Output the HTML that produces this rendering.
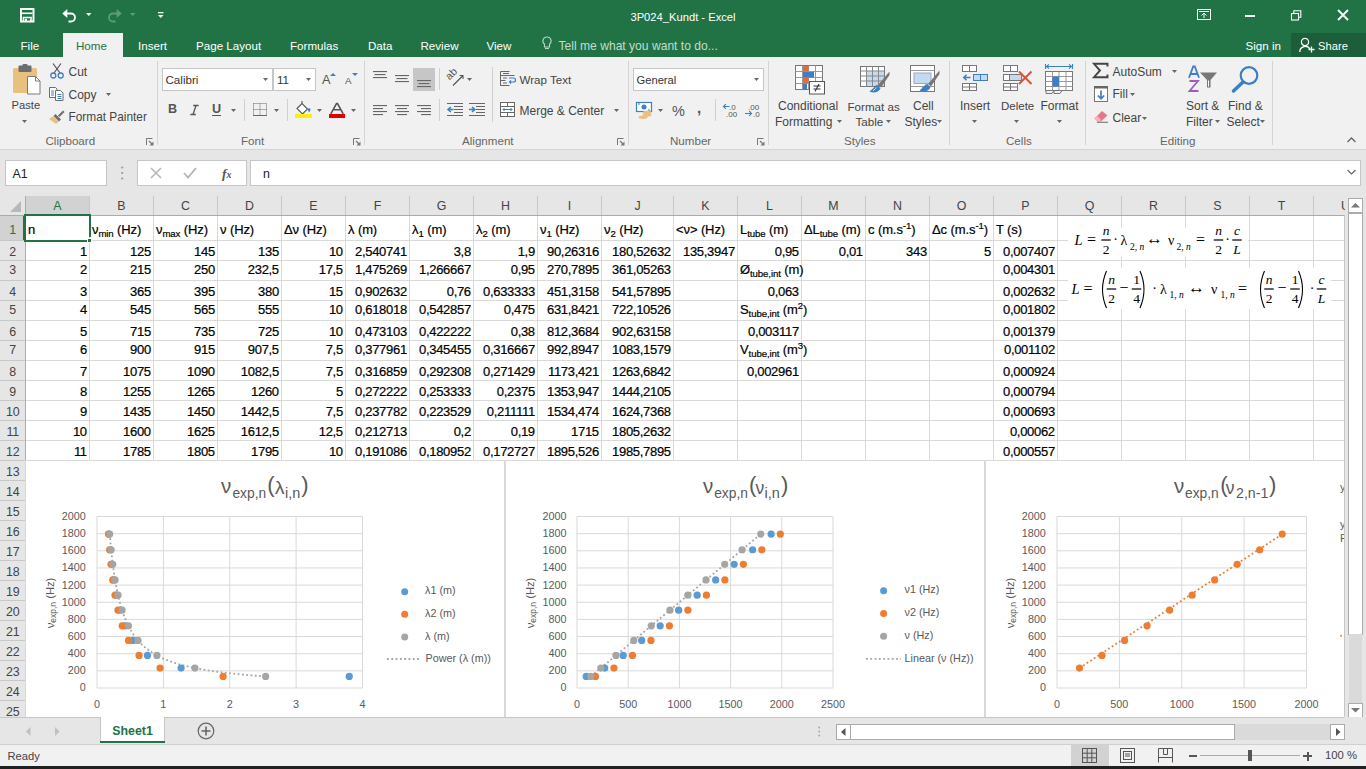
<!DOCTYPE html><html><head><meta charset="utf-8"><style>
*{margin:0;padding:0;box-sizing:border-box}
html,body{width:1366px;height:769px;overflow:hidden;background:#fff;font-family:"Liberation Sans",sans-serif}
.a{position:absolute}
.t{position:absolute;white-space:nowrap;line-height:1}
sub{font-size:74%;vertical-align:-0.3em;line-height:0}
sup{font-size:74%;vertical-align:0.55em;line-height:0}
svg{position:absolute;overflow:visible}
</style></head><body><div class="a" style="left:0px;top:0px;width:1366px;height:57px;background:#217346;"></div>
<svg style="left:20px;top:8px" width="15" height="14" viewBox="0 0 15 14"><path d="M1 1h12.5v12.5H1z" fill="none" stroke="#fff" stroke-width="1.9"/><path d="M2 5.3h10.5" stroke="#fff" stroke-width="1.6"/><path d="M3.5 13.5V9.5h7.5v4" fill="none" stroke="#fff" stroke-width="1.6"/><rect x="5" y="10.8" width="2" height="2.7" fill="#fff"/></svg>
<svg style="left:62px;top:8px" width="16" height="14" viewBox="0 0 16 14"><path d="M4.5 5.5H9a4 4 0 0 1 0 8H6.5" fill="none" stroke="#fff" stroke-width="1.8"/><path d="M0.3 5.5L5.3 1v9z" fill="#fff"/></svg>
<svg style="left:86px;top:13px" width="6" height="4" viewBox="0 0 6 4"><path d="M0 0h5.5L2.75 3z" fill="#fff"/></svg>
<svg style="left:106px;top:8px" width="16" height="14" viewBox="0 0 16 14"><path d="M11.5 5.5H7a4 4 0 0 0 0 8h2.5" fill="none" stroke="#5e9c78" stroke-width="1.8"/><path d="M15.7 5.5L10.7 1v9z" fill="#5e9c78"/></svg>
<svg style="left:130px;top:13px" width="6" height="4" viewBox="0 0 6 4"><path d="M0 0h5.5L2.75 3z" fill="#5e9c78"/></svg>
<svg style="left:157.5px;top:11.5px" width="6" height="7" viewBox="0 0 6 7"><rect x="0" y="0" width="5.5" height="1.3" fill="#fff"/><path d="M0 3h5.5L2.75 6z" fill="#fff"/></svg>
<div class="t" style="left:483.00px;width:400px;text-align:center;top:11.52px;font-size:11.2px;color:#fff;">3P024_Kundt - Excel</div>
<svg style="left:1197px;top:9px" width="14" height="12" viewBox="0 0 14 12"><rect x="0.5" y="0.5" width="13" height="10" fill="none" stroke="#fff"/><path d="M7 9V4M4.5 6.5L7 4l2.5 2.5" fill="none" stroke="#fff"/><path d="M2 2.5h10" stroke="#fff"/></svg>
<div class="a" style="left:1245px;top:15px;width:10px;height:2px;background:#fff;"></div>
<svg style="left:1291px;top:10px" width="11" height="11" viewBox="0 0 11 11"><rect x="0.5" y="3.5" width="7" height="6.5" fill="none" stroke="#fff" stroke-width="1.1"/><path d="M2.8 3.5V0.8h7v6.5H7.5" fill="none" stroke="#fff" stroke-width="1.1"/></svg>
<svg style="left:1337px;top:9px" width="12" height="12" viewBox="0 0 12 12"><path d="M1 1l10 10M11 1L1 11" stroke="#fff" stroke-width="1.8"/></svg>
<div class="a" style="left:63px;top:33px;width:60px;height:24px;background:#f1f1f1;"></div>
<div class="t" style="left:20.50px;top:40.18px;font-size:11.6px;color:#fff;">File</div>
<div class="t" style="left:76.00px;top:40.18px;font-size:11.6px;color:#217346;">Home</div>
<div class="t" style="left:138.00px;top:40.18px;font-size:11.6px;color:#fff;">Insert</div>
<div class="t" style="left:196.00px;top:40.18px;font-size:11.6px;color:#fff;">Page Layout</div>
<div class="t" style="left:290.00px;top:40.18px;font-size:11.6px;color:#fff;">Formulas</div>
<div class="t" style="left:368.00px;top:40.18px;font-size:11.6px;color:#fff;">Data</div>
<div class="t" style="left:420.50px;top:40.18px;font-size:11.6px;color:#fff;">Review</div>
<div class="t" style="left:486.50px;top:40.18px;font-size:11.6px;color:#fff;">View</div>
<svg style="left:542px;top:36px" width="10" height="15" viewBox="0 0 10 15"><path d="M5 1a4 4 0 0 0-2.5 7.2V11h5V8.2A4 4 0 0 0 5 1z" fill="none" stroke="#b9d6c5" stroke-width="1.1"/><path d="M3 12.5h4" stroke="#b9d6c5" stroke-width="1.1"/></svg>
<div class="t" style="left:558.50px;top:39.76px;font-size:12.1px;color:#c3dccd;">Tell me what you want to do...</div>
<div class="t" style="left:1245.50px;top:40.18px;font-size:11.6px;color:#fff;">Sign in</div>
<div class="a" style="left:1291px;top:33px;width:75px;height:24px;background:#1b5e39;"></div>
<svg style="left:1299px;top:37px" width="16" height="16" viewBox="0 0 16 16"><circle cx="6" cy="5" r="3.6" fill="none" stroke="#fff" stroke-width="1.3"/><path d="M0.8 15a5.5 5.5 0 0 1 10.4-2.5" fill="none" stroke="#fff" stroke-width="1.3"/><path d="M12.5 9.5v6M9.5 12.5h6" stroke="#fff" stroke-width="1.3"/></svg>
<div class="t" style="left:1318.00px;top:40.52px;font-size:11.2px;color:#fff;">Share</div>
<div class="a" style="left:0px;top:57px;width:1366px;height:92px;background:#f1f1f1;"></div>
<div class="a" style="left:0px;top:149px;width:1366px;height:1px;background:#d5d5d5;"></div>
<svg style="left:13px;top:65px" width="29" height="30" viewBox="0 0 29 30"><rect x="0" y="3" width="24" height="25" rx="1.5" fill="#e8c07f"/><rect x="5.5" y="0.5" width="13" height="6.5" rx="1" fill="#6d6d6d"/><rect x="9.5" y="-1" width="5" height="3" rx="1" fill="#6d6d6d"/><path d="M14.5 11.5h8l4.5 4.5v13h-12.5z" fill="#fff" stroke="#7a7a7a" stroke-width="1"/><path d="M22.5 11.5v4.5h4.5" fill="none" stroke="#7a7a7a" stroke-width="1"/></svg>
<div class="t" style="left:11.50px;top:100.02px;font-size:11.2px;color:#444;">Paste</div>
<svg style="left:22.0px;top:120.0px" width="5" height="3" viewBox="0 0 5 3"><path d="M0 0h5L2.5 3z" fill="#666"/></svg>
<svg style="left:50px;top:63px" width="14" height="16" viewBox="0 0 14 16"><path d="M3 0.5l7 9.5M11 0.5L4 10" stroke="#555" stroke-width="1.2"/><circle cx="3.3" cy="12.5" r="2.5" fill="none" stroke="#3d7ec4" stroke-width="1.3"/><circle cx="10.7" cy="12.5" r="2.5" fill="none" stroke="#3d7ec4" stroke-width="1.3"/></svg>
<div class="t" style="left:68.50px;top:65.84px;font-size:12px;color:#444;">Cut</div>
<svg style="left:49px;top:87px" width="15" height="14" viewBox="0 0 15 14"><path d="M0.5 0.5h6l1.5 1.5v8.5H0.5z" fill="#fff" stroke="#6d6d6d"/><path d="M6.5 3.5h5l2.5 2.5v7.5h-7.5z" fill="#fff" stroke="#6d6d6d"/><path d="M2 4h3M2 6h3M2 8h3" stroke="#3d7ec4"/><path d="M8.5 7.5h4M8.5 9.5h4M8.5 11.5h4" stroke="#3d7ec4"/></svg>
<div class="t" style="left:68.50px;top:88.84px;font-size:12px;color:#444;">Copy</div>
<svg style="left:106.0px;top:93.0px" width="5" height="3" viewBox="0 0 5 3"><path d="M0 0h5L2.5 3z" fill="#666"/></svg>
<svg style="left:49px;top:110px" width="16" height="14" viewBox="0 0 16 14"><path d="M9 5.5l5-5 1.5 1.5-5 5z" fill="#6d6d6d"/><path d="M6.5 4l5.5 5.5-2 2L4.5 6z" fill="#6d6d6d"/><path d="M0 9l4.5-3 5.5 5.5-3 2.5z" fill="#e8c07f"/></svg>
<div class="t" style="left:68.50px;top:111.97px;font-size:11.85px;color:#444;">Format Painter</div>
<div class="t" style="left:45.50px;top:135.18px;font-size:11.6px;color:#666;">Clipboard</div>
<svg style="left:146px;top:138px" width="8" height="8" viewBox="0 0 8 8"><path d="M0.5 7V0.5H6.5" fill="none" stroke="#777" stroke-width="1"/><path d="M3 3l3 3" stroke="#777" stroke-width="1.2"/><path d="M7.5 3.5v4h-4z" fill="#777"/></svg>
<div class="a" style="left:157px;top:61px;width:1px;height:84px;background:#d5d5d5;"></div>
<div class="a" style="left:162px;top:68px;width:111px;height:23px;background:#fff;border:1px solid #c6c6c6"></div>
<div class="t" style="left:165.50px;top:74.18px;font-size:11.6px;color:#333;">Calibri</div>
<svg style="left:263.0px;top:78.0px" width="5" height="3" viewBox="0 0 5 3"><path d="M0 0h5L2.5 3z" fill="#666"/></svg>
<div class="a" style="left:273px;top:68px;width:43px;height:23px;background:#fff;border:1px solid #c6c6c6"></div>
<div class="t" style="left:277.00px;top:74.18px;font-size:11.6px;color:#333;">11</div>
<svg style="left:306.0px;top:78.0px" width="5" height="3" viewBox="0 0 5 3"><path d="M0 0h5L2.5 3z" fill="#666"/></svg>
<div class="t" style="left:322.00px;top:73.76px;font-size:12.8px;color:#555;">A</div>
<svg style="left:330px;top:72.5px" width="6" height="3" viewBox="0 0 6 3"><path d="M0 3L3 0 6 3z" fill="#3d7ec4"/></svg>
<div class="t" style="left:345.00px;top:76.30px;font-size:9.8px;color:#555;">A</div>
<svg style="left:352px;top:72.5px" width="6" height="3" viewBox="0 0 6 3"><path d="M0 0h6L3 3z" fill="#3d7ec4"/></svg>
<div class="t" style="left:168.00px;top:103.13px;font-size:12.6px;color:#555;font-weight:bold">B</div>
<svg style="left:190px;top:104.5px" width="9" height="10" viewBox="0 0 9 10"><path d="M3.2 0.5h5.5M0.3 9.5h5.5M6 0.5L3 9.5" fill="none" stroke="#555" stroke-width="1.3"/></svg>
<div class="t" style="left:212.00px;top:103.13px;font-size:12.6px;color:#555;font-weight:bold">U</div>
<div class="a" style="left:212px;top:115px;width:9px;height:1.3px;background:#555;"></div>
<svg style="left:231.0px;top:109.0px" width="5" height="3" viewBox="0 0 5 3"><path d="M0 0h5L2.5 3z" fill="#666"/></svg>
<div class="a" style="left:244px;top:99px;width:1px;height:22px;background:#d0d0d0;"></div>
<svg style="left:253px;top:103px" width="14" height="13" viewBox="0 0 14 13"><path d="M0.5 0.5h13v12M0.5 0.5v12M7 0.5v12M0.5 6.5h13" fill="none" stroke="#666" stroke-width="1" stroke-dasharray="1 1"/><path d="M0 12.5h14" stroke="#666" stroke-width="1"/></svg>
<svg style="left:274.0px;top:109.0px" width="5" height="3" viewBox="0 0 5 3"><path d="M0 0h5L2.5 3z" fill="#666"/></svg>
<div class="a" style="left:287px;top:99px;width:1px;height:22px;background:#d0d0d0;"></div>
<svg style="left:295px;top:101px" width="17" height="17" viewBox="0 0 17 17"><path d="M2 7.5l5-5 5.5 5.5-5 5z" fill="#fff" stroke="#555" stroke-width="1.1"/><path d="M7 2.5V0" stroke="#555" stroke-width="1.1"/><path d="M12.5 8c1.5-1 2.5-1 3 .5-.5 1.5-1 2.5-1.5 3z" fill="#3d7ec4"/><rect x="0" y="13" width="17" height="4" fill="#ffef00"/></svg>
<svg style="left:317.0px;top:109.0px" width="5" height="3" viewBox="0 0 5 3"><path d="M0 0h5L2.5 3z" fill="#666"/></svg>
<svg style="left:330px;top:103px" width="14" height="11" viewBox="0 0 14 11"><path d="M0.8 10.8L6.5 0.5h1L13.2 10.8M3 6.8h8" fill="none" stroke="#555" stroke-width="1.6"/></svg>
<div class="a" style="left:329px;top:114px;width:16px;height:4px;background:#e00000;"></div>
<svg style="left:351.0px;top:109.0px" width="5" height="3" viewBox="0 0 5 3"><path d="M0 0h5L2.5 3z" fill="#666"/></svg>
<div class="t" style="left:241.00px;top:135.18px;font-size:11.6px;color:#666;">Font</div>
<svg style="left:353px;top:138px" width="8" height="8" viewBox="0 0 8 8"><path d="M0.5 7V0.5H6.5" fill="none" stroke="#777" stroke-width="1"/><path d="M3 3l3 3" stroke="#777" stroke-width="1.2"/><path d="M7.5 3.5v4h-4z" fill="#777"/></svg>
<div class="a" style="left:364px;top:61px;width:1px;height:84px;background:#d5d5d5;"></div>
<svg style="left:373px;top:71px" width="14" height="9" viewBox="0 0 14 9"><rect x="0.0" y="0" width="14" height="1.1" fill="#666"/><rect x="1.5" y="3" width="11" height="1.1" fill="#666"/><rect x="0.0" y="6" width="14" height="1.1" fill="#666"/></svg>
<svg style="left:395px;top:75px" width="14" height="9" viewBox="0 0 14 9"><rect x="0.0" y="0" width="14" height="1.1" fill="#666"/><rect x="1.5" y="3" width="11" height="1.1" fill="#666"/><rect x="0.0" y="6" width="14" height="1.1" fill="#666"/></svg>
<div class="a" style="left:413px;top:68px;width:22px;height:23px;background:#c6c6c6;"></div>
<svg style="left:417px;top:80px" width="14" height="9" viewBox="0 0 14 9"><rect x="0.0" y="0" width="14" height="1.1" fill="#666"/><rect x="1.5" y="3" width="11" height="1.1" fill="#666"/><rect x="0.0" y="6" width="14" height="1.1" fill="#666"/></svg>
<svg style="left:373px;top:104.5px" width="14" height="12" viewBox="0 0 14 12"><rect x="0" y="0" width="14" height="1.1" fill="#666"/><rect x="0" y="3" width="10" height="1.1" fill="#666"/><rect x="0" y="6" width="14" height="1.1" fill="#666"/><rect x="0" y="9" width="10" height="1.1" fill="#666"/></svg>
<svg style="left:395px;top:104.5px" width="14" height="12" viewBox="0 0 14 12"><rect x="0.0" y="0" width="14" height="1.1" fill="#666"/><rect x="2.0" y="3" width="10" height="1.1" fill="#666"/><rect x="0.0" y="6" width="14" height="1.1" fill="#666"/><rect x="2.0" y="9" width="10" height="1.1" fill="#666"/></svg>
<svg style="left:417px;top:104.5px" width="14" height="12" viewBox="0 0 14 12"><rect x="0" y="0" width="14" height="1.1" fill="#666"/><rect x="4" y="3" width="10" height="1.1" fill="#666"/><rect x="0" y="6" width="14" height="1.1" fill="#666"/><rect x="4" y="9" width="10" height="1.1" fill="#666"/></svg>
<svg style="left:447px;top:71px" width="17" height="15" viewBox="0 0 17 15"><text x="0" y="0" font-size="10.5" fill="#555" font-family="Liberation Sans" transform="translate(2.5,9.5) rotate(-45)">ab</text><path d="M6 14.5L16 4.5M12.5 4.5H16V8" fill="none" stroke="#555" stroke-width="1.1"/></svg>
<svg style="left:467.0px;top:78.0px" width="5" height="3" viewBox="0 0 5 3"><path d="M0 0h5L2.5 3z" fill="#666"/></svg>
<div class="a" style="left:439px;top:68px;width:1px;height:22px;background:#d0d0d0;"></div>
<div class="a" style="left:439px;top:99px;width:1px;height:22px;background:#d0d0d0;"></div>
<svg style="left:447px;top:103px" width="16" height="13" viewBox="0 0 16 13"><path d="M0 0.5h16M7 3.5h9M7 6.5h9M7 9.5h9M0 12.5h16" stroke="#666" stroke-width="1.1"/><path d="M1 6.5h5.5M3.8 4L1 6.5 3.8 9" fill="none" stroke="#3d7ec4" stroke-width="1.6"/></svg>
<svg style="left:469px;top:103px" width="16" height="13" viewBox="0 0 16 13"><path d="M0 0.5h16M7 3.5h9M7 6.5h9M7 9.5h9M0 12.5h16" stroke="#666" stroke-width="1.1"/><path d="M0 6.5h5.5M3 4l2.8 2.5L3 9" fill="none" stroke="#3d7ec4" stroke-width="1.6"/></svg>
<div class="a" style="left:492px;top:67px;width:1px;height:55px;background:#d0d0d0;"></div>
<svg style="left:500px;top:71px" width="16" height="15" viewBox="0 0 16 15"><path d="M0.5 0.5h9M0.5 0.5v14M0.5 4.5h14M0.5 9.5h5M0.5 14.5h9M3 2.5h6M3 7h4M3 12h4" fill="none" stroke="#666"/><path d="M9 7h4.5a2 2 0 0 1 0 4H9.5M11 9.5l-1.5 1.5 1.5 1.5" fill="none" stroke="#3d7ec4" stroke-width="1.2"/></svg>
<div class="t" style="left:519.50px;top:74.18px;font-size:11.6px;color:#444;">Wrap Text</div>
<svg style="left:500px;top:102px" width="15" height="15" viewBox="0 0 15 15"><rect x="0.5" y="0.5" width="14" height="14" fill="#fff" stroke="#666"/><path d="M0.5 4.5h14M0.5 10.5h14M7.5 0.5v4M7.5 10.5v4" stroke="#666"/><path d="M3 7.5h9M4.5 6L3 7.5 4.5 9M10.5 6L12 7.5 10.5 9" fill="none" stroke="#3d7ec4"/></svg>
<div class="t" style="left:519.50px;top:104.84px;font-size:12px;color:#444;">Merge &amp; Center</div>
<svg style="left:614.0px;top:109.0px" width="5" height="3" viewBox="0 0 5 3"><path d="M0 0h5L2.5 3z" fill="#666"/></svg>
<div class="t" style="left:462.00px;top:135.18px;font-size:11.6px;color:#666;">Alignment</div>
<svg style="left:617px;top:138px" width="8" height="8" viewBox="0 0 8 8"><path d="M0.5 7V0.5H6.5" fill="none" stroke="#777" stroke-width="1"/><path d="M3 3l3 3" stroke="#777" stroke-width="1.2"/><path d="M7.5 3.5v4h-4z" fill="#777"/></svg>
<div class="a" style="left:628px;top:61px;width:1px;height:84px;background:#d5d5d5;"></div>
<div class="a" style="left:633px;top:68px;width:131px;height:23px;background:#fff;border:1px solid #c6c6c6"></div>
<div class="t" style="left:636.50px;top:74.52px;font-size:11.2px;color:#333;">General</div>
<svg style="left:754.0px;top:78.0px" width="5" height="3" viewBox="0 0 5 3"><path d="M0 0h5L2.5 3z" fill="#666"/></svg>
<svg style="left:636px;top:102px" width="17" height="17" viewBox="0 0 17 17"><rect x="0.5" y="0.5" width="15" height="9" fill="#fff" stroke="#3d7ec4" stroke-width="1.2"/><path d="M2 2h2M12 8h2" stroke="#3d7ec4"/><circle cx="8" cy="5" r="2.5" fill="#3d7ec4"/><ellipse cx="11" cy="10.5" rx="4.5" ry="1.7" fill="#e8c07f"/><ellipse cx="11" cy="13" rx="4.5" ry="1.7" fill="#e8c07f"/><ellipse cx="7" cy="15.3" rx="4.5" ry="1.7" fill="#e8c07f"/></svg>
<svg style="left:658.0px;top:109.0px" width="5" height="3" viewBox="0 0 5 3"><path d="M0 0h5L2.5 3z" fill="#666"/></svg>
<div class="t" style="left:672.00px;top:103.73px;font-size:14.5px;color:#555;">%</div>
<div class="t" style="left:697.00px;top:99.80px;font-size:15px;color:#555;font-weight:bold">,</div>
<div class="a" style="left:715px;top:99px;width:1px;height:22px;background:#d0d0d0;"></div>
<svg style="left:723px;top:103px" width="15" height="14" viewBox="0 0 15 14"><text x="6" y="6.5" font-size="8" fill="#555" font-family="Liberation Sans">.0</text><text x="3" y="13.5" font-size="8" fill="#555" font-family="Liberation Sans">.00</text><path d="M0.5 3.5h6M2.8 1.2L0.5 3.5l2.3 2.3" fill="none" stroke="#3d7ec4" stroke-width="1.1"/></svg>
<svg style="left:745px;top:103px" width="15" height="14" viewBox="0 0 15 14"><text x="3" y="6.5" font-size="8" fill="#555" font-family="Liberation Sans">.00</text><text x="8" y="13.5" font-size="8" fill="#555" font-family="Liberation Sans">.0</text><path d="M0 10.5h6.5M4.2 8.2l2.3 2.3-2.3 2.3" fill="none" stroke="#3d7ec4" stroke-width="1.1"/></svg>
<div class="t" style="left:670.00px;top:135.18px;font-size:11.6px;color:#666;">Number</div>
<svg style="left:757px;top:138px" width="8" height="8" viewBox="0 0 8 8"><path d="M0.5 7V0.5H6.5" fill="none" stroke="#777" stroke-width="1"/><path d="M3 3l3 3" stroke="#777" stroke-width="1.2"/><path d="M7.5 3.5v4h-4z" fill="#777"/></svg>
<div class="a" style="left:768px;top:61px;width:1px;height:84px;background:#d5d5d5;"></div>
<svg style="left:795px;top:65px" width="31" height="30" viewBox="0 0 31 30"><rect x="0.5" y="0.5" width="27" height="24" fill="#fff" stroke="#777"/><path d="M0.5 6.5h27M0.5 12.5h27M0.5 18.5h27M7.5 0.5v24M13.5 0.5v24M20.5 0.5v24" stroke="#999"/><rect x="8" y="1" width="5.5" height="5.5" fill="#e46c3a"/><rect x="8" y="7" width="11" height="5.5" fill="#3d7ec4"/><rect x="8" y="13" width="5.5" height="5.5" fill="#e46c3a"/><rect x="8" y="19" width="4" height="5.5" fill="#3d7ec4"/><rect x="14.5" y="16.5" width="15" height="12.5" fill="#fff" stroke="#555"/><path d="M18.5 21h7M18.5 24h7M24 19l-4 7.5" stroke="#333" stroke-width="1.1"/></svg>
<div class="t" style="left:778.00px;top:100.34px;font-size:12px;color:#444;">Conditional</div>
<div class="t" style="left:775.00px;top:115.84px;font-size:12px;color:#444;">Formatting</div>
<svg style="left:837.0px;top:120.0px" width="5" height="3" viewBox="0 0 5 3"><path d="M0 0h5L2.5 3z" fill="#666"/></svg>
<svg style="left:860px;top:66px" width="30" height="29" viewBox="0 0 30 29"><rect x="0.5" y="0.5" width="24" height="20" fill="#fff" stroke="#777"/><rect x="6" y="5" width="18" height="15" fill="#c5d9f1"/><path d="M0.5 5h24M0.5 10h24M0.5 15h24M6.5 0.5v20M12.5 0.5v20M18.5 0.5v20" stroke="#888"/><path d="M29.5 5.5L18 19l3 2.5L29.5 9z" fill="#777"/><path d="M17.5 19c-3 0-3.5 3.5-8 6.5 4 2 9 1 11-3z" fill="#3d7ec4"/><path d="M13 24.5c1.5-.5 2.5-2 3-3" stroke="#fff" stroke-width="1"/></svg>
<div class="t" style="left:847.50px;top:100.68px;font-size:11.6px;color:#444;">Format as</div>
<div class="t" style="left:855.50px;top:116.18px;font-size:11.6px;color:#444;">Table</div>
<svg style="left:886.0px;top:120.0px" width="5" height="3" viewBox="0 0 5 3"><path d="M0 0h5L2.5 3z" fill="#666"/></svg>
<svg style="left:910px;top:65px" width="30" height="30" viewBox="0 0 30 30"><rect x="0.5" y="0.5" width="24" height="26" fill="#fff" stroke="#777"/><path d="M0.5 5.5h24M0.5 21.5h24M12.5 21.5v5" stroke="#999"/><rect x="4" y="8" width="17" height="10.5" fill="#c5d9f1" stroke="#9ab"/><path d="M29.5 5.5L18 19l3 2.5L29.5 9z" fill="#777"/><path d="M17.5 19c-3 0-3.5 3.5-8 6.5 4 2 9 1 11-3z" fill="#3d7ec4"/></svg>
<div class="t" style="left:913.00px;top:100.34px;font-size:12px;color:#444;">Cell</div>
<div class="t" style="left:904.50px;top:115.84px;font-size:12px;color:#444;">Styles</div>
<svg style="left:937.0px;top:120.0px" width="5" height="3" viewBox="0 0 5 3"><path d="M0 0h5L2.5 3z" fill="#666"/></svg>
<div class="t" style="left:844.00px;top:135.18px;font-size:11.6px;color:#666;">Styles</div>
<div class="a" style="left:949px;top:61px;width:1px;height:84px;background:#d5d5d5;"></div>
<svg style="left:962px;top:65px" width="26" height="26" viewBox="0 0 26 26"><rect x="0.5" y="0.5" width="14" height="6" fill="#fff" stroke="#777"/><path d="M7.5 0.5v6" stroke="#777"/><rect x="11.5" y="9.5" width="14" height="6" fill="#c5d9f1" stroke="#3d7ec4"/><path d="M18.5 9.5v6" stroke="#3d7ec4"/><path d="M1.5 12.5h7M4.5 9.8L1.8 12.5 4.5 15.2" fill="none" stroke="#3d7ec4" stroke-width="1.5"/><rect x="0.5" y="18.5" width="14" height="7" fill="#fff" stroke="#777"/><path d="M7.5 18.5v7M0.5 22h14" stroke="#777"/></svg>
<div class="t" style="left:960.00px;top:100.34px;font-size:12px;color:#444;">Insert</div>
<svg style="left:972.0px;top:120.0px" width="5" height="3" viewBox="0 0 5 3"><path d="M0 0h5L2.5 3z" fill="#666"/></svg>
<svg style="left:1003px;top:65px" width="30" height="26" viewBox="0 0 30 26"><rect x="0.5" y="0.5" width="14" height="6" fill="#fff" stroke="#777"/><path d="M7.5 0.5v6" stroke="#777"/><rect x="6.5" y="9.5" width="12" height="6" fill="#c5d9f1" stroke="#777"/><rect x="0.5" y="9.5" width="6" height="6" fill="#fff" stroke="#777"/><rect x="0.5" y="18.5" width="14" height="7" fill="#fff" stroke="#777"/><path d="M7.5 18.5v7M0.5 22h14" stroke="#777"/><path d="M16 6.5l12.5 12.5M28.5 6.5L16 19" stroke="#e0522f" stroke-width="2"/></svg>
<div class="t" style="left:1001.00px;top:100.77px;font-size:11.5px;color:#444;">Delete</div>
<svg style="left:1014.0px;top:120.0px" width="5" height="3" viewBox="0 0 5 3"><path d="M0 0h5L2.5 3z" fill="#666"/></svg>
<svg style="left:1045px;top:64px" width="29" height="31" viewBox="0 0 29 31"><path d="M1.5 2.5h25M4 0.3L1.5 2.5 4 4.7M24 0.3l2.5 2.2L24 4.7M0.5 0v5M27.5 0v5" fill="none" stroke="#3d7ec4" stroke-width="1.1"/><rect x="0.5" y="7.5" width="27" height="19" fill="#fff" stroke="#777"/><path d="M0.5 12.5h27M0.5 17.5h27M0.5 22.5h27M7.5 7.5v19M14 7.5v19M21 7.5v19" stroke="#999"/><rect x="7.5" y="12.5" width="6.5" height="10" fill="#3d7ec4"/><path d="M1 26.5v3h6l2-3M9 26.5v3h6l2-3" fill="none" stroke="#777"/></svg>
<div class="t" style="left:1040.50px;top:100.34px;font-size:12px;color:#444;">Format</div>
<svg style="left:1057.0px;top:120.0px" width="5" height="3" viewBox="0 0 5 3"><path d="M0 0h5L2.5 3z" fill="#666"/></svg>
<div class="t" style="left:1006.00px;top:135.18px;font-size:11.6px;color:#666;">Cells</div>
<div class="a" style="left:1085px;top:61px;width:1px;height:84px;background:#d5d5d5;"></div>
<svg style="left:1093px;top:63px" width="15" height="15" viewBox="0 0 15 15"><path d="M14.5 3.5V0.8H1l6 6.7-6 6.7h13.5v-2.7" fill="none" stroke="#444" stroke-width="1.9"/></svg>
<div class="t" style="left:1112.50px;top:65.84px;font-size:12px;color:#444;">AutoSum</div>
<svg style="left:1172.0px;top:70.0px" width="5" height="3" viewBox="0 0 5 3"><path d="M0 0h5L2.5 3z" fill="#666"/></svg>
<svg style="left:1094px;top:86px" width="14" height="16" viewBox="0 0 14 16"><rect x="0.5" y="0.5" width="13" height="15" fill="#fff" stroke="#777"/><rect x="0" y="0" width="14" height="2.5" fill="#666"/><path d="M7 4.5v8M3.8 9.5L7 12.8l3.2-3.3" fill="none" stroke="#3d7ec4" stroke-width="1.7"/></svg>
<div class="t" style="left:1112.50px;top:88.34px;font-size:12px;color:#444;">Fill</div>
<svg style="left:1130.0px;top:93.0px" width="5" height="3" viewBox="0 0 5 3"><path d="M0 0h5L2.5 3z" fill="#666"/></svg>
<svg style="left:1094px;top:110px" width="15" height="13" viewBox="0 0 15 13"><path d="M0.5 8.5L8 1l5.5 4.5L7 11.5H3.5z" fill="#e8768a"/><path d="M3.5 11.5L0.5 8.5 3.5 6l4 4.5z" fill="#f3b3bf"/><path d="M3 12.3h11" stroke="#777" stroke-width="1.1"/></svg>
<div class="t" style="left:1112.50px;top:111.84px;font-size:12px;color:#444;">Clear</div>
<svg style="left:1142.0px;top:117.0px" width="5" height="3" viewBox="0 0 5 3"><path d="M0 0h5L2.5 3z" fill="#666"/></svg>
<svg style="left:1188px;top:66px" width="30" height="27" viewBox="0 0 30 27"><path d="M1 11.8L5.2 0.5h1.6l4.2 11.3M2.6 8h6.8" fill="none" stroke="#3d7ec4" stroke-width="1.8"/><path d="M1.5 15h8.5L1.5 25h9" fill="none" stroke="#9c5cc4" stroke-width="1.8"/><path d="M12 6.5h17l-6.5 7.5v7.5h-3.5v-7.5z" fill="#777"/><path d="M20.5 14.5v6" stroke="#fff" stroke-width="1"/></svg>
<div class="t" style="left:1186.00px;top:100.34px;font-size:12px;color:#444;">Sort &amp;</div>
<div class="t" style="left:1186.00px;top:115.84px;font-size:12px;color:#444;">Filter</div>
<svg style="left:1215.0px;top:120.0px" width="5" height="3" viewBox="0 0 5 3"><path d="M0 0h5L2.5 3z" fill="#666"/></svg>
<svg style="left:1231px;top:65px" width="30" height="28" viewBox="0 0 30 28"><circle cx="18" cy="10.5" r="8.3" fill="none" stroke="#3d7ec4" stroke-width="2.2"/><path d="M12 17L2.5 26" stroke="#3d7ec4" stroke-width="3.5" stroke-linecap="round"/></svg>
<div class="t" style="left:1228.00px;top:100.34px;font-size:12px;color:#444;">Find &amp;</div>
<div class="t" style="left:1226.50px;top:115.84px;font-size:12px;color:#444;">Select</div>
<svg style="left:1260.0px;top:120.0px" width="5" height="3" viewBox="0 0 5 3"><path d="M0 0h5L2.5 3z" fill="#666"/></svg>
<div class="t" style="left:1160.00px;top:135.18px;font-size:11.6px;color:#666;">Editing</div>
<div class="a" style="left:1272px;top:61px;width:1px;height:84px;background:#d5d5d5;"></div>
<svg style="left:1347px;top:137px" width="9" height="6" viewBox="0 0 9 6"><path d="M0.5 5L4.5 1l4 4" fill="none" stroke="#666" stroke-width="1.3"/></svg>
<div class="a" style="left:0px;top:150px;width:1366px;height:46px;background:#e6e6e6;"></div>
<div class="a" style="left:5px;top:160px;width:102px;height:26px;background:#fff;border:1px solid #c6c6c6"></div>
<div class="t" style="left:12.50px;top:167.50px;font-size:12.4px;color:#222;">A1</div>
<svg style="left:121px;top:166px" width="3" height="15" viewBox="0 0 3 15"><circle cx="1.2" cy="1.5" r="1.1" fill="#999"/><circle cx="1.2" cy="7" r="1.1" fill="#999"/><circle cx="1.2" cy="12.5" r="1.1" fill="#999"/></svg>
<div class="a" style="left:137px;top:160px;width:110px;height:26px;background:#fff;border:1px solid #c6c6c6"></div>
<svg style="left:150px;top:167px" width="12" height="12" viewBox="0 0 12 12"><path d="M1 1l10 10M11 1L1 11" stroke="#b5b5b5" stroke-width="1.5"/></svg>
<svg style="left:183px;top:167px" width="14" height="12" viewBox="0 0 14 12"><path d="M1 6l4 4.5L13 1" fill="none" stroke="#b5b5b5" stroke-width="1.8"/></svg>
<div class="t" style="left:222.00px;top:166.57px;font-size:13.5px;color:#555;font-family:'Liberation Serif';font-style:italic;font-weight:bold">f<span style="font-size:10px">x</span></div>
<div class="a" style="left:250px;top:160px;width:1111px;height:26px;background:#fff;border:1px solid #c6c6c6"></div>
<div class="t" style="left:263.00px;top:167.50px;font-size:12.4px;color:#222;">n</div>
<svg style="left:1347px;top:169px" width="9" height="6" viewBox="0 0 9 6"><path d="M0.5 1l4 4 4-4" fill="none" stroke="#666" stroke-width="1.2"/></svg>
<div class="a" style="left:0px;top:196px;width:1345px;height:19px;background:#e6e6e6;"></div>
<div class="a" style="left:0px;top:215px;width:1345px;height:1px;background:#ababab;"></div>
<div class="a" style="left:0px;top:216px;width:25px;height:501px;background:#e6e6e6;"></div>
<div class="a" style="left:25px;top:196px;width:1px;height:521px;background:#ababab;"></div>
<svg style="left:10px;top:201px" width="12" height="12" viewBox="0 0 12 12"><path d="M11 0v11H0z" fill="#b8b8b8"/></svg>
<div class="a" style="left:26px;top:216px;width:1319px;height:501px;background:#fff;"></div>
<div class="a" style="left:26px;top:196px;width:63px;height:19px;background:#d2d2d2;"></div>
<div class="a" style="left:26px;top:214px;width:63px;height:2px;background:#217346;"></div>
<div class="a" style="left:89px;top:196px;width:1px;height:19px;background:#c8c8c8;"></div>
<div class="t" style="left:-142.50px;width:400px;text-align:center;top:199.50px;font-size:12.4px;color:#217346;">A</div>
<div class="a" style="left:153px;top:196px;width:1px;height:19px;background:#c8c8c8;"></div>
<div class="t" style="left:-78.50px;width:400px;text-align:center;top:199.50px;font-size:12.4px;color:#444;">B</div>
<div class="a" style="left:217px;top:196px;width:1px;height:19px;background:#c8c8c8;"></div>
<div class="t" style="left:-14.50px;width:400px;text-align:center;top:199.50px;font-size:12.4px;color:#444;">C</div>
<div class="a" style="left:281px;top:196px;width:1px;height:19px;background:#c8c8c8;"></div>
<div class="t" style="left:49.50px;width:400px;text-align:center;top:199.50px;font-size:12.4px;color:#444;">D</div>
<div class="a" style="left:345px;top:196px;width:1px;height:19px;background:#c8c8c8;"></div>
<div class="t" style="left:113.50px;width:400px;text-align:center;top:199.50px;font-size:12.4px;color:#444;">E</div>
<div class="a" style="left:409px;top:196px;width:1px;height:19px;background:#c8c8c8;"></div>
<div class="t" style="left:177.50px;width:400px;text-align:center;top:199.50px;font-size:12.4px;color:#444;">F</div>
<div class="a" style="left:473px;top:196px;width:1px;height:19px;background:#c8c8c8;"></div>
<div class="t" style="left:241.50px;width:400px;text-align:center;top:199.50px;font-size:12.4px;color:#444;">G</div>
<div class="a" style="left:537px;top:196px;width:1px;height:19px;background:#c8c8c8;"></div>
<div class="t" style="left:305.50px;width:400px;text-align:center;top:199.50px;font-size:12.4px;color:#444;">H</div>
<div class="a" style="left:601px;top:196px;width:1px;height:19px;background:#c8c8c8;"></div>
<div class="t" style="left:369.50px;width:400px;text-align:center;top:199.50px;font-size:12.4px;color:#444;">I</div>
<div class="a" style="left:673px;top:196px;width:1px;height:19px;background:#c8c8c8;"></div>
<div class="t" style="left:437.50px;width:400px;text-align:center;top:199.50px;font-size:12.4px;color:#444;">J</div>
<div class="a" style="left:737px;top:196px;width:1px;height:19px;background:#c8c8c8;"></div>
<div class="t" style="left:505.50px;width:400px;text-align:center;top:199.50px;font-size:12.4px;color:#444;">K</div>
<div class="a" style="left:801px;top:196px;width:1px;height:19px;background:#c8c8c8;"></div>
<div class="t" style="left:569.50px;width:400px;text-align:center;top:199.50px;font-size:12.4px;color:#444;">L</div>
<div class="a" style="left:865px;top:196px;width:1px;height:19px;background:#c8c8c8;"></div>
<div class="t" style="left:633.50px;width:400px;text-align:center;top:199.50px;font-size:12.4px;color:#444;">M</div>
<div class="a" style="left:929px;top:196px;width:1px;height:19px;background:#c8c8c8;"></div>
<div class="t" style="left:697.50px;width:400px;text-align:center;top:199.50px;font-size:12.4px;color:#444;">N</div>
<div class="a" style="left:993px;top:196px;width:1px;height:19px;background:#c8c8c8;"></div>
<div class="t" style="left:761.50px;width:400px;text-align:center;top:199.50px;font-size:12.4px;color:#444;">O</div>
<div class="a" style="left:1057px;top:196px;width:1px;height:19px;background:#c8c8c8;"></div>
<div class="t" style="left:825.50px;width:400px;text-align:center;top:199.50px;font-size:12.4px;color:#444;">P</div>
<div class="a" style="left:1121px;top:196px;width:1px;height:19px;background:#c8c8c8;"></div>
<div class="t" style="left:889.50px;width:400px;text-align:center;top:199.50px;font-size:12.4px;color:#444;">Q</div>
<div class="a" style="left:1185px;top:196px;width:1px;height:19px;background:#c8c8c8;"></div>
<div class="t" style="left:953.50px;width:400px;text-align:center;top:199.50px;font-size:12.4px;color:#444;">R</div>
<div class="a" style="left:1249px;top:196px;width:1px;height:19px;background:#c8c8c8;"></div>
<div class="t" style="left:1017.50px;width:400px;text-align:center;top:199.50px;font-size:12.4px;color:#444;">S</div>
<div class="a" style="left:1313px;top:196px;width:1px;height:19px;background:#c8c8c8;"></div>
<div class="t" style="left:1081.50px;width:400px;text-align:center;top:199.50px;font-size:12.4px;color:#444;">T</div>
<div class="t" style="left:1145.50px;width:400px;text-align:center;top:199.50px;font-size:12.4px;color:#444;">U</div>
<div class="a" style="left:0px;top:216px;width:25px;height:24px;background:#d2d2d2;"></div>
<div class="a" style="left:0px;top:240px;width:25px;height:1px;background:#c8c8c8;"></div>
<div class="t" style="left:-187.20px;width:400px;text-align:center;top:224.00px;font-size:12.4px;color:#217346;">1</div>
<div class="a" style="left:0px;top:260px;width:25px;height:1px;background:#c8c8c8;"></div>
<div class="t" style="left:-187.20px;width:400px;text-align:center;top:245.90px;font-size:12.4px;color:#444;">2</div>
<div class="a" style="left:0px;top:280px;width:25px;height:1px;background:#c8c8c8;"></div>
<div class="t" style="left:-187.20px;width:400px;text-align:center;top:264.30px;font-size:12.4px;color:#444;">3</div>
<div class="a" style="left:0px;top:300px;width:25px;height:1px;background:#c8c8c8;"></div>
<div class="t" style="left:-187.20px;width:400px;text-align:center;top:285.90px;font-size:12.4px;color:#444;">4</div>
<div class="a" style="left:0px;top:320px;width:25px;height:1px;background:#c8c8c8;"></div>
<div class="t" style="left:-187.20px;width:400px;text-align:center;top:304.30px;font-size:12.4px;color:#444;">5</div>
<div class="a" style="left:0px;top:340px;width:25px;height:1px;background:#c8c8c8;"></div>
<div class="t" style="left:-187.20px;width:400px;text-align:center;top:325.90px;font-size:12.4px;color:#444;">6</div>
<div class="a" style="left:0px;top:360px;width:25px;height:1px;background:#c8c8c8;"></div>
<div class="t" style="left:-187.20px;width:400px;text-align:center;top:344.30px;font-size:12.4px;color:#444;">7</div>
<div class="a" style="left:0px;top:380px;width:25px;height:1px;background:#c8c8c8;"></div>
<div class="t" style="left:-187.20px;width:400px;text-align:center;top:365.90px;font-size:12.4px;color:#444;">8</div>
<div class="a" style="left:0px;top:400px;width:25px;height:1px;background:#c8c8c8;"></div>
<div class="t" style="left:-187.20px;width:400px;text-align:center;top:385.90px;font-size:12.4px;color:#444;">9</div>
<div class="a" style="left:0px;top:420px;width:25px;height:1px;background:#c8c8c8;"></div>
<div class="t" style="left:-187.20px;width:400px;text-align:center;top:405.90px;font-size:12.4px;color:#444;">10</div>
<div class="a" style="left:0px;top:440px;width:25px;height:1px;background:#c8c8c8;"></div>
<div class="t" style="left:-187.20px;width:400px;text-align:center;top:425.90px;font-size:12.4px;color:#444;">11</div>
<div class="a" style="left:0px;top:460px;width:25px;height:1px;background:#c8c8c8;"></div>
<div class="t" style="left:-187.20px;width:400px;text-align:center;top:445.90px;font-size:12.4px;color:#444;">12</div>
<div class="a" style="left:0px;top:480px;width:25px;height:1px;background:#c8c8c8;"></div>
<div class="t" style="left:-187.20px;width:400px;text-align:center;top:465.90px;font-size:12.4px;color:#444;">13</div>
<div class="a" style="left:0px;top:500px;width:25px;height:1px;background:#c8c8c8;"></div>
<div class="t" style="left:-187.20px;width:400px;text-align:center;top:485.90px;font-size:12.4px;color:#444;">14</div>
<div class="a" style="left:0px;top:520px;width:25px;height:1px;background:#c8c8c8;"></div>
<div class="t" style="left:-187.20px;width:400px;text-align:center;top:505.90px;font-size:12.4px;color:#444;">15</div>
<div class="a" style="left:0px;top:540px;width:25px;height:1px;background:#c8c8c8;"></div>
<div class="t" style="left:-187.20px;width:400px;text-align:center;top:525.90px;font-size:12.4px;color:#444;">16</div>
<div class="a" style="left:0px;top:560px;width:25px;height:1px;background:#c8c8c8;"></div>
<div class="t" style="left:-187.20px;width:400px;text-align:center;top:545.90px;font-size:12.4px;color:#444;">17</div>
<div class="a" style="left:0px;top:580px;width:25px;height:1px;background:#c8c8c8;"></div>
<div class="t" style="left:-187.20px;width:400px;text-align:center;top:565.90px;font-size:12.4px;color:#444;">18</div>
<div class="a" style="left:0px;top:600px;width:25px;height:1px;background:#c8c8c8;"></div>
<div class="t" style="left:-187.20px;width:400px;text-align:center;top:585.90px;font-size:12.4px;color:#444;">19</div>
<div class="a" style="left:0px;top:620px;width:25px;height:1px;background:#c8c8c8;"></div>
<div class="t" style="left:-187.20px;width:400px;text-align:center;top:605.90px;font-size:12.4px;color:#444;">20</div>
<div class="a" style="left:0px;top:640px;width:25px;height:1px;background:#c8c8c8;"></div>
<div class="t" style="left:-187.20px;width:400px;text-align:center;top:625.90px;font-size:12.4px;color:#444;">21</div>
<div class="a" style="left:0px;top:660px;width:25px;height:1px;background:#c8c8c8;"></div>
<div class="t" style="left:-187.20px;width:400px;text-align:center;top:645.90px;font-size:12.4px;color:#444;">22</div>
<div class="a" style="left:0px;top:680px;width:25px;height:1px;background:#c8c8c8;"></div>
<div class="t" style="left:-187.20px;width:400px;text-align:center;top:665.90px;font-size:12.4px;color:#444;">23</div>
<div class="a" style="left:0px;top:700px;width:25px;height:1px;background:#c8c8c8;"></div>
<div class="t" style="left:-187.20px;width:400px;text-align:center;top:685.90px;font-size:12.4px;color:#444;">24</div>
<div class="a" style="left:0px;top:720px;width:25px;height:1px;background:#c8c8c8;"></div>
<div class="t" style="left:-187.20px;width:400px;text-align:center;top:705.90px;font-size:12.4px;color:#444;">25</div>
<div class="a" style="left:23px;top:216px;width:2px;height:24px;background:#217346;"></div>
<div class="a" style="left:26px;top:216px;width:1319px;height:501px;overflow:hidden">
<div class="a" style="left:0;top:24px;width:1319px;height:1px;background:#d9d9d9"></div>
<div class="a" style="left:0;top:44px;width:1319px;height:1px;background:#d9d9d9"></div>
<div class="a" style="left:0;top:64px;width:1319px;height:1px;background:#d9d9d9"></div>
<div class="a" style="left:0;top:84px;width:1319px;height:1px;background:#d9d9d9"></div>
<div class="a" style="left:0;top:104px;width:1319px;height:1px;background:#d9d9d9"></div>
<div class="a" style="left:0;top:124px;width:1319px;height:1px;background:#d9d9d9"></div>
<div class="a" style="left:0;top:144px;width:1319px;height:1px;background:#d9d9d9"></div>
<div class="a" style="left:0;top:164px;width:1319px;height:1px;background:#d9d9d9"></div>
<div class="a" style="left:0;top:184px;width:1319px;height:1px;background:#d9d9d9"></div>
<div class="a" style="left:0;top:204px;width:1319px;height:1px;background:#d9d9d9"></div>
<div class="a" style="left:0;top:224px;width:1319px;height:1px;background:#d9d9d9"></div>
<div class="a" style="left:0;top:244px;width:1319px;height:1px;background:#d9d9d9"></div>
<div class="a" style="left:63px;top:0;width:1px;height:245px;background:#d9d9d9"></div>
<div class="a" style="left:127px;top:0;width:1px;height:245px;background:#d9d9d9"></div>
<div class="a" style="left:191px;top:0;width:1px;height:245px;background:#d9d9d9"></div>
<div class="a" style="left:255px;top:0;width:1px;height:245px;background:#d9d9d9"></div>
<div class="a" style="left:319px;top:0;width:1px;height:245px;background:#d9d9d9"></div>
<div class="a" style="left:383px;top:0;width:1px;height:245px;background:#d9d9d9"></div>
<div class="a" style="left:447px;top:0;width:1px;height:245px;background:#d9d9d9"></div>
<div class="a" style="left:511px;top:0;width:1px;height:245px;background:#d9d9d9"></div>
<div class="a" style="left:575px;top:0;width:1px;height:245px;background:#d9d9d9"></div>
<div class="a" style="left:647px;top:0;width:1px;height:245px;background:#d9d9d9"></div>
<div class="a" style="left:711px;top:0;width:1px;height:245px;background:#d9d9d9"></div>
<div class="a" style="left:775px;top:0;width:1px;height:245px;background:#d9d9d9"></div>
<div class="a" style="left:839px;top:0;width:1px;height:245px;background:#d9d9d9"></div>
<div class="a" style="left:903px;top:0;width:1px;height:245px;background:#d9d9d9"></div>
<div class="a" style="left:967px;top:0;width:1px;height:245px;background:#d9d9d9"></div>
<div class="a" style="left:1031px;top:0;width:1px;height:245px;background:#d9d9d9"></div>
<div class="a" style="left:1095px;top:0;width:1px;height:245px;background:#d9d9d9"></div>
<div class="a" style="left:1159px;top:0;width:1px;height:245px;background:#d9d9d9"></div>
<div class="a" style="left:1223px;top:0;width:1px;height:245px;background:#d9d9d9"></div>
<div class="a" style="left:1287px;top:0;width:1px;height:245px;background:#d9d9d9"></div>
</div>
<div class="a" style="left:24px;top:214px;width:66px;height:2px;background:#217346;"></div>
<div class="a" style="left:24px;top:240px;width:66px;height:2px;background:#217346;"></div>
<div class="a" style="left:24px;top:214px;width:2px;height:28px;background:#217346;"></div>
<div class="a" style="left:89px;top:214px;width:2px;height:23px;background:#217346;"></div>
<div class="a" style="left:87px;top:238px;width:5px;height:5px;background:#217346;border:1px solid #fff"></div>
<div class="t" style="left:28.00px;top:222.80px;font-size:13px;color:#000;letter-spacing:-0.1px;-webkit-text-stroke:0.2px #000">n</div>
<div class="t" style="left:92.00px;top:222.80px;font-size:13px;color:#000;letter-spacing:-0.1px;-webkit-text-stroke:0.2px #000">&#957;<sub>min</sub> (Hz)</div>
<div class="t" style="left:156.00px;top:222.80px;font-size:13px;color:#000;letter-spacing:-0.1px;-webkit-text-stroke:0.2px #000">&#957;<sub>max</sub> (Hz)</div>
<div class="t" style="left:220.00px;top:222.80px;font-size:13px;color:#000;letter-spacing:-0.1px;-webkit-text-stroke:0.2px #000">&#957; (Hz)</div>
<div class="t" style="left:284.00px;top:222.80px;font-size:13px;color:#000;letter-spacing:-0.1px;-webkit-text-stroke:0.2px #000">&#916;&#957; (Hz)</div>
<div class="t" style="left:348.00px;top:222.80px;font-size:13px;color:#000;letter-spacing:-0.1px;-webkit-text-stroke:0.2px #000">&#955; (m)</div>
<div class="t" style="left:412.00px;top:222.80px;font-size:13px;color:#000;letter-spacing:-0.1px;-webkit-text-stroke:0.2px #000">&#955;<sub>1</sub> (m)</div>
<div class="t" style="left:476.00px;top:222.80px;font-size:13px;color:#000;letter-spacing:-0.1px;-webkit-text-stroke:0.2px #000">&#955;<sub>2</sub> (m)</div>
<div class="t" style="left:540.00px;top:222.80px;font-size:13px;color:#000;letter-spacing:-0.1px;-webkit-text-stroke:0.2px #000">&#957;<sub>1</sub> (Hz)</div>
<div class="t" style="left:604.00px;top:222.80px;font-size:13px;color:#000;letter-spacing:-0.1px;-webkit-text-stroke:0.2px #000">&#957;<sub>2</sub> (Hz)</div>
<div class="t" style="left:676.00px;top:222.80px;font-size:13px;color:#000;letter-spacing:-0.1px;-webkit-text-stroke:0.2px #000">&lt;&#957;&gt; (Hz)</div>
<div class="t" style="left:740.00px;top:222.80px;font-size:13px;color:#000;letter-spacing:-0.1px;-webkit-text-stroke:0.2px #000">L<sub>tube</sub> (m)</div>
<div class="t" style="left:804.00px;top:222.80px;font-size:13px;color:#000;letter-spacing:-0.1px;-webkit-text-stroke:0.2px #000">&#916;L<sub>tube</sub> (m)</div>
<div class="t" style="left:868.00px;top:222.80px;font-size:13px;color:#000;letter-spacing:-0.1px;-webkit-text-stroke:0.2px #000">c (m.s<sup>-1</sup>)</div>
<div class="t" style="left:932.00px;top:222.80px;font-size:13px;color:#000;letter-spacing:-0.1px;-webkit-text-stroke:0.2px #000">&#916;c (m.s<sup>-1</sup>)</div>
<div class="t" style="left:996.00px;top:222.80px;font-size:13px;color:#000;letter-spacing:-0.1px;-webkit-text-stroke:0.2px #000">T (s)</div>
<div class="t" style="right:1279.20px;top:244.80px;font-size:13px;color:#000;text-align:right;letter-spacing:-0.3px;-webkit-text-stroke:0.2px #000">1</div>
<div class="t" style="right:1215.20px;top:244.80px;font-size:13px;color:#000;text-align:right;letter-spacing:-0.3px;-webkit-text-stroke:0.2px #000">125</div>
<div class="t" style="right:1151.20px;top:244.80px;font-size:13px;color:#000;text-align:right;letter-spacing:-0.3px;-webkit-text-stroke:0.2px #000">145</div>
<div class="t" style="right:1087.20px;top:244.80px;font-size:13px;color:#000;text-align:right;letter-spacing:-0.3px;-webkit-text-stroke:0.2px #000">135</div>
<div class="t" style="right:1023.20px;top:244.80px;font-size:13px;color:#000;text-align:right;letter-spacing:-0.3px;-webkit-text-stroke:0.2px #000">10</div>
<div class="t" style="right:959.20px;top:244.80px;font-size:13px;color:#000;text-align:right;letter-spacing:-0.3px;-webkit-text-stroke:0.2px #000">2,540741</div>
<div class="t" style="right:895.20px;top:244.80px;font-size:13px;color:#000;text-align:right;letter-spacing:-0.3px;-webkit-text-stroke:0.2px #000">3,8</div>
<div class="t" style="right:831.20px;top:244.80px;font-size:13px;color:#000;text-align:right;letter-spacing:-0.3px;-webkit-text-stroke:0.2px #000">1,9</div>
<div class="t" style="right:767.20px;top:244.80px;font-size:13px;color:#000;text-align:right;letter-spacing:-0.3px;-webkit-text-stroke:0.2px #000">90,26316</div>
<div class="t" style="right:695.20px;top:244.80px;font-size:13px;color:#000;text-align:right;letter-spacing:-0.3px;-webkit-text-stroke:0.2px #000">180,52632</div>
<div class="t" style="right:631.20px;top:244.80px;font-size:13px;color:#000;text-align:right;letter-spacing:-0.3px;-webkit-text-stroke:0.2px #000">135,3947</div>
<div class="t" style="right:567.20px;top:244.80px;font-size:13px;color:#000;text-align:right;letter-spacing:-0.3px;-webkit-text-stroke:0.2px #000">0,95</div>
<div class="t" style="right:503.20px;top:244.80px;font-size:13px;color:#000;text-align:right;letter-spacing:-0.3px;-webkit-text-stroke:0.2px #000">0,01</div>
<div class="t" style="right:439.20px;top:244.80px;font-size:13px;color:#000;text-align:right;letter-spacing:-0.3px;-webkit-text-stroke:0.2px #000">343</div>
<div class="t" style="right:375.20px;top:244.80px;font-size:13px;color:#000;text-align:right;letter-spacing:-0.3px;-webkit-text-stroke:0.2px #000">5</div>
<div class="t" style="right:311.20px;top:244.80px;font-size:13px;color:#000;text-align:right;letter-spacing:-0.3px;-webkit-text-stroke:0.2px #000">0,007407</div>
<div class="t" style="right:1279.20px;top:262.80px;font-size:13px;color:#000;text-align:right;letter-spacing:-0.3px;-webkit-text-stroke:0.2px #000">2</div>
<div class="t" style="right:1215.20px;top:262.80px;font-size:13px;color:#000;text-align:right;letter-spacing:-0.3px;-webkit-text-stroke:0.2px #000">215</div>
<div class="t" style="right:1151.20px;top:262.80px;font-size:13px;color:#000;text-align:right;letter-spacing:-0.3px;-webkit-text-stroke:0.2px #000">250</div>
<div class="t" style="right:1087.20px;top:262.80px;font-size:13px;color:#000;text-align:right;letter-spacing:-0.3px;-webkit-text-stroke:0.2px #000">232,5</div>
<div class="t" style="right:1023.20px;top:262.80px;font-size:13px;color:#000;text-align:right;letter-spacing:-0.3px;-webkit-text-stroke:0.2px #000">17,5</div>
<div class="t" style="right:959.20px;top:262.80px;font-size:13px;color:#000;text-align:right;letter-spacing:-0.3px;-webkit-text-stroke:0.2px #000">1,475269</div>
<div class="t" style="right:895.20px;top:262.80px;font-size:13px;color:#000;text-align:right;letter-spacing:-0.3px;-webkit-text-stroke:0.2px #000">1,266667</div>
<div class="t" style="right:831.20px;top:262.80px;font-size:13px;color:#000;text-align:right;letter-spacing:-0.3px;-webkit-text-stroke:0.2px #000">0,95</div>
<div class="t" style="right:767.20px;top:262.80px;font-size:13px;color:#000;text-align:right;letter-spacing:-0.3px;-webkit-text-stroke:0.2px #000">270,7895</div>
<div class="t" style="right:695.20px;top:262.80px;font-size:13px;color:#000;text-align:right;letter-spacing:-0.3px;-webkit-text-stroke:0.2px #000">361,05263</div>
<div class="t" style="right:311.20px;top:262.80px;font-size:13px;color:#000;text-align:right;letter-spacing:-0.3px;-webkit-text-stroke:0.2px #000">0,004301</div>
<div class="t" style="right:1279.20px;top:284.80px;font-size:13px;color:#000;text-align:right;letter-spacing:-0.3px;-webkit-text-stroke:0.2px #000">3</div>
<div class="t" style="right:1215.20px;top:284.80px;font-size:13px;color:#000;text-align:right;letter-spacing:-0.3px;-webkit-text-stroke:0.2px #000">365</div>
<div class="t" style="right:1151.20px;top:284.80px;font-size:13px;color:#000;text-align:right;letter-spacing:-0.3px;-webkit-text-stroke:0.2px #000">395</div>
<div class="t" style="right:1087.20px;top:284.80px;font-size:13px;color:#000;text-align:right;letter-spacing:-0.3px;-webkit-text-stroke:0.2px #000">380</div>
<div class="t" style="right:1023.20px;top:284.80px;font-size:13px;color:#000;text-align:right;letter-spacing:-0.3px;-webkit-text-stroke:0.2px #000">15</div>
<div class="t" style="right:959.20px;top:284.80px;font-size:13px;color:#000;text-align:right;letter-spacing:-0.3px;-webkit-text-stroke:0.2px #000">0,902632</div>
<div class="t" style="right:895.20px;top:284.80px;font-size:13px;color:#000;text-align:right;letter-spacing:-0.3px;-webkit-text-stroke:0.2px #000">0,76</div>
<div class="t" style="right:831.20px;top:284.80px;font-size:13px;color:#000;text-align:right;letter-spacing:-0.3px;-webkit-text-stroke:0.2px #000">0,633333</div>
<div class="t" style="right:767.20px;top:284.80px;font-size:13px;color:#000;text-align:right;letter-spacing:-0.3px;-webkit-text-stroke:0.2px #000">451,3158</div>
<div class="t" style="right:695.20px;top:284.80px;font-size:13px;color:#000;text-align:right;letter-spacing:-0.3px;-webkit-text-stroke:0.2px #000">541,57895</div>
<div class="t" style="right:567.20px;top:284.80px;font-size:13px;color:#000;text-align:right;letter-spacing:-0.3px;-webkit-text-stroke:0.2px #000">0,063</div>
<div class="t" style="right:311.20px;top:284.80px;font-size:13px;color:#000;text-align:right;letter-spacing:-0.3px;-webkit-text-stroke:0.2px #000">0,002632</div>
<div class="t" style="right:1279.20px;top:302.80px;font-size:13px;color:#000;text-align:right;letter-spacing:-0.3px;-webkit-text-stroke:0.2px #000">4</div>
<div class="t" style="right:1215.20px;top:302.80px;font-size:13px;color:#000;text-align:right;letter-spacing:-0.3px;-webkit-text-stroke:0.2px #000">545</div>
<div class="t" style="right:1151.20px;top:302.80px;font-size:13px;color:#000;text-align:right;letter-spacing:-0.3px;-webkit-text-stroke:0.2px #000">565</div>
<div class="t" style="right:1087.20px;top:302.80px;font-size:13px;color:#000;text-align:right;letter-spacing:-0.3px;-webkit-text-stroke:0.2px #000">555</div>
<div class="t" style="right:1023.20px;top:302.80px;font-size:13px;color:#000;text-align:right;letter-spacing:-0.3px;-webkit-text-stroke:0.2px #000">10</div>
<div class="t" style="right:959.20px;top:302.80px;font-size:13px;color:#000;text-align:right;letter-spacing:-0.3px;-webkit-text-stroke:0.2px #000">0,618018</div>
<div class="t" style="right:895.20px;top:302.80px;font-size:13px;color:#000;text-align:right;letter-spacing:-0.3px;-webkit-text-stroke:0.2px #000">0,542857</div>
<div class="t" style="right:831.20px;top:302.80px;font-size:13px;color:#000;text-align:right;letter-spacing:-0.3px;-webkit-text-stroke:0.2px #000">0,475</div>
<div class="t" style="right:767.20px;top:302.80px;font-size:13px;color:#000;text-align:right;letter-spacing:-0.3px;-webkit-text-stroke:0.2px #000">631,8421</div>
<div class="t" style="right:695.20px;top:302.80px;font-size:13px;color:#000;text-align:right;letter-spacing:-0.3px;-webkit-text-stroke:0.2px #000">722,10526</div>
<div class="t" style="right:311.20px;top:302.80px;font-size:13px;color:#000;text-align:right;letter-spacing:-0.3px;-webkit-text-stroke:0.2px #000">0,001802</div>
<div class="t" style="right:1279.20px;top:324.80px;font-size:13px;color:#000;text-align:right;letter-spacing:-0.3px;-webkit-text-stroke:0.2px #000">5</div>
<div class="t" style="right:1215.20px;top:324.80px;font-size:13px;color:#000;text-align:right;letter-spacing:-0.3px;-webkit-text-stroke:0.2px #000">715</div>
<div class="t" style="right:1151.20px;top:324.80px;font-size:13px;color:#000;text-align:right;letter-spacing:-0.3px;-webkit-text-stroke:0.2px #000">735</div>
<div class="t" style="right:1087.20px;top:324.80px;font-size:13px;color:#000;text-align:right;letter-spacing:-0.3px;-webkit-text-stroke:0.2px #000">725</div>
<div class="t" style="right:1023.20px;top:324.80px;font-size:13px;color:#000;text-align:right;letter-spacing:-0.3px;-webkit-text-stroke:0.2px #000">10</div>
<div class="t" style="right:959.20px;top:324.80px;font-size:13px;color:#000;text-align:right;letter-spacing:-0.3px;-webkit-text-stroke:0.2px #000">0,473103</div>
<div class="t" style="right:895.20px;top:324.80px;font-size:13px;color:#000;text-align:right;letter-spacing:-0.3px;-webkit-text-stroke:0.2px #000">0,422222</div>
<div class="t" style="right:831.20px;top:324.80px;font-size:13px;color:#000;text-align:right;letter-spacing:-0.3px;-webkit-text-stroke:0.2px #000">0,38</div>
<div class="t" style="right:767.20px;top:324.80px;font-size:13px;color:#000;text-align:right;letter-spacing:-0.3px;-webkit-text-stroke:0.2px #000">812,3684</div>
<div class="t" style="right:695.20px;top:324.80px;font-size:13px;color:#000;text-align:right;letter-spacing:-0.3px;-webkit-text-stroke:0.2px #000">902,63158</div>
<div class="t" style="right:567.20px;top:324.80px;font-size:13px;color:#000;text-align:right;letter-spacing:-0.3px;-webkit-text-stroke:0.2px #000">0,003117</div>
<div class="t" style="right:311.20px;top:324.80px;font-size:13px;color:#000;text-align:right;letter-spacing:-0.3px;-webkit-text-stroke:0.2px #000">0,001379</div>
<div class="t" style="right:1279.20px;top:342.80px;font-size:13px;color:#000;text-align:right;letter-spacing:-0.3px;-webkit-text-stroke:0.2px #000">6</div>
<div class="t" style="right:1215.20px;top:342.80px;font-size:13px;color:#000;text-align:right;letter-spacing:-0.3px;-webkit-text-stroke:0.2px #000">900</div>
<div class="t" style="right:1151.20px;top:342.80px;font-size:13px;color:#000;text-align:right;letter-spacing:-0.3px;-webkit-text-stroke:0.2px #000">915</div>
<div class="t" style="right:1087.20px;top:342.80px;font-size:13px;color:#000;text-align:right;letter-spacing:-0.3px;-webkit-text-stroke:0.2px #000">907,5</div>
<div class="t" style="right:1023.20px;top:342.80px;font-size:13px;color:#000;text-align:right;letter-spacing:-0.3px;-webkit-text-stroke:0.2px #000">7,5</div>
<div class="t" style="right:959.20px;top:342.80px;font-size:13px;color:#000;text-align:right;letter-spacing:-0.3px;-webkit-text-stroke:0.2px #000">0,377961</div>
<div class="t" style="right:895.20px;top:342.80px;font-size:13px;color:#000;text-align:right;letter-spacing:-0.3px;-webkit-text-stroke:0.2px #000">0,345455</div>
<div class="t" style="right:831.20px;top:342.80px;font-size:13px;color:#000;text-align:right;letter-spacing:-0.3px;-webkit-text-stroke:0.2px #000">0,316667</div>
<div class="t" style="right:767.20px;top:342.80px;font-size:13px;color:#000;text-align:right;letter-spacing:-0.3px;-webkit-text-stroke:0.2px #000">992,8947</div>
<div class="t" style="right:695.20px;top:342.80px;font-size:13px;color:#000;text-align:right;letter-spacing:-0.3px;-webkit-text-stroke:0.2px #000">1083,1579</div>
<div class="t" style="right:311.20px;top:342.80px;font-size:13px;color:#000;text-align:right;letter-spacing:-0.3px;-webkit-text-stroke:0.2px #000">0,001102</div>
<div class="t" style="right:1279.20px;top:364.80px;font-size:13px;color:#000;text-align:right;letter-spacing:-0.3px;-webkit-text-stroke:0.2px #000">7</div>
<div class="t" style="right:1215.20px;top:364.80px;font-size:13px;color:#000;text-align:right;letter-spacing:-0.3px;-webkit-text-stroke:0.2px #000">1075</div>
<div class="t" style="right:1151.20px;top:364.80px;font-size:13px;color:#000;text-align:right;letter-spacing:-0.3px;-webkit-text-stroke:0.2px #000">1090</div>
<div class="t" style="right:1087.20px;top:364.80px;font-size:13px;color:#000;text-align:right;letter-spacing:-0.3px;-webkit-text-stroke:0.2px #000">1082,5</div>
<div class="t" style="right:1023.20px;top:364.80px;font-size:13px;color:#000;text-align:right;letter-spacing:-0.3px;-webkit-text-stroke:0.2px #000">7,5</div>
<div class="t" style="right:959.20px;top:364.80px;font-size:13px;color:#000;text-align:right;letter-spacing:-0.3px;-webkit-text-stroke:0.2px #000">0,316859</div>
<div class="t" style="right:895.20px;top:364.80px;font-size:13px;color:#000;text-align:right;letter-spacing:-0.3px;-webkit-text-stroke:0.2px #000">0,292308</div>
<div class="t" style="right:831.20px;top:364.80px;font-size:13px;color:#000;text-align:right;letter-spacing:-0.3px;-webkit-text-stroke:0.2px #000">0,271429</div>
<div class="t" style="right:767.20px;top:364.80px;font-size:13px;color:#000;text-align:right;letter-spacing:-0.3px;-webkit-text-stroke:0.2px #000">1173,421</div>
<div class="t" style="right:695.20px;top:364.80px;font-size:13px;color:#000;text-align:right;letter-spacing:-0.3px;-webkit-text-stroke:0.2px #000">1263,6842</div>
<div class="t" style="right:567.20px;top:364.80px;font-size:13px;color:#000;text-align:right;letter-spacing:-0.3px;-webkit-text-stroke:0.2px #000">0,002961</div>
<div class="t" style="right:311.20px;top:364.80px;font-size:13px;color:#000;text-align:right;letter-spacing:-0.3px;-webkit-text-stroke:0.2px #000">0,000924</div>
<div class="t" style="right:1279.20px;top:384.80px;font-size:13px;color:#000;text-align:right;letter-spacing:-0.3px;-webkit-text-stroke:0.2px #000">8</div>
<div class="t" style="right:1215.20px;top:384.80px;font-size:13px;color:#000;text-align:right;letter-spacing:-0.3px;-webkit-text-stroke:0.2px #000">1255</div>
<div class="t" style="right:1151.20px;top:384.80px;font-size:13px;color:#000;text-align:right;letter-spacing:-0.3px;-webkit-text-stroke:0.2px #000">1265</div>
<div class="t" style="right:1087.20px;top:384.80px;font-size:13px;color:#000;text-align:right;letter-spacing:-0.3px;-webkit-text-stroke:0.2px #000">1260</div>
<div class="t" style="right:1023.20px;top:384.80px;font-size:13px;color:#000;text-align:right;letter-spacing:-0.3px;-webkit-text-stroke:0.2px #000">5</div>
<div class="t" style="right:959.20px;top:384.80px;font-size:13px;color:#000;text-align:right;letter-spacing:-0.3px;-webkit-text-stroke:0.2px #000">0,272222</div>
<div class="t" style="right:895.20px;top:384.80px;font-size:13px;color:#000;text-align:right;letter-spacing:-0.3px;-webkit-text-stroke:0.2px #000">0,253333</div>
<div class="t" style="right:831.20px;top:384.80px;font-size:13px;color:#000;text-align:right;letter-spacing:-0.3px;-webkit-text-stroke:0.2px #000">0,2375</div>
<div class="t" style="right:767.20px;top:384.80px;font-size:13px;color:#000;text-align:right;letter-spacing:-0.3px;-webkit-text-stroke:0.2px #000">1353,947</div>
<div class="t" style="right:695.20px;top:384.80px;font-size:13px;color:#000;text-align:right;letter-spacing:-0.3px;-webkit-text-stroke:0.2px #000">1444,2105</div>
<div class="t" style="right:311.20px;top:384.80px;font-size:13px;color:#000;text-align:right;letter-spacing:-0.3px;-webkit-text-stroke:0.2px #000">0,000794</div>
<div class="t" style="right:1279.20px;top:404.80px;font-size:13px;color:#000;text-align:right;letter-spacing:-0.3px;-webkit-text-stroke:0.2px #000">9</div>
<div class="t" style="right:1215.20px;top:404.80px;font-size:13px;color:#000;text-align:right;letter-spacing:-0.3px;-webkit-text-stroke:0.2px #000">1435</div>
<div class="t" style="right:1151.20px;top:404.80px;font-size:13px;color:#000;text-align:right;letter-spacing:-0.3px;-webkit-text-stroke:0.2px #000">1450</div>
<div class="t" style="right:1087.20px;top:404.80px;font-size:13px;color:#000;text-align:right;letter-spacing:-0.3px;-webkit-text-stroke:0.2px #000">1442,5</div>
<div class="t" style="right:1023.20px;top:404.80px;font-size:13px;color:#000;text-align:right;letter-spacing:-0.3px;-webkit-text-stroke:0.2px #000">7,5</div>
<div class="t" style="right:959.20px;top:404.80px;font-size:13px;color:#000;text-align:right;letter-spacing:-0.3px;-webkit-text-stroke:0.2px #000">0,237782</div>
<div class="t" style="right:895.20px;top:404.80px;font-size:13px;color:#000;text-align:right;letter-spacing:-0.3px;-webkit-text-stroke:0.2px #000">0,223529</div>
<div class="t" style="right:831.20px;top:404.80px;font-size:13px;color:#000;text-align:right;letter-spacing:-0.3px;-webkit-text-stroke:0.2px #000">0,211111</div>
<div class="t" style="right:767.20px;top:404.80px;font-size:13px;color:#000;text-align:right;letter-spacing:-0.3px;-webkit-text-stroke:0.2px #000">1534,474</div>
<div class="t" style="right:695.20px;top:404.80px;font-size:13px;color:#000;text-align:right;letter-spacing:-0.3px;-webkit-text-stroke:0.2px #000">1624,7368</div>
<div class="t" style="right:311.20px;top:404.80px;font-size:13px;color:#000;text-align:right;letter-spacing:-0.3px;-webkit-text-stroke:0.2px #000">0,000693</div>
<div class="t" style="right:1279.20px;top:424.80px;font-size:13px;color:#000;text-align:right;letter-spacing:-0.3px;-webkit-text-stroke:0.2px #000">10</div>
<div class="t" style="right:1215.20px;top:424.80px;font-size:13px;color:#000;text-align:right;letter-spacing:-0.3px;-webkit-text-stroke:0.2px #000">1600</div>
<div class="t" style="right:1151.20px;top:424.80px;font-size:13px;color:#000;text-align:right;letter-spacing:-0.3px;-webkit-text-stroke:0.2px #000">1625</div>
<div class="t" style="right:1087.20px;top:424.80px;font-size:13px;color:#000;text-align:right;letter-spacing:-0.3px;-webkit-text-stroke:0.2px #000">1612,5</div>
<div class="t" style="right:1023.20px;top:424.80px;font-size:13px;color:#000;text-align:right;letter-spacing:-0.3px;-webkit-text-stroke:0.2px #000">12,5</div>
<div class="t" style="right:959.20px;top:424.80px;font-size:13px;color:#000;text-align:right;letter-spacing:-0.3px;-webkit-text-stroke:0.2px #000">0,212713</div>
<div class="t" style="right:895.20px;top:424.80px;font-size:13px;color:#000;text-align:right;letter-spacing:-0.3px;-webkit-text-stroke:0.2px #000">0,2</div>
<div class="t" style="right:831.20px;top:424.80px;font-size:13px;color:#000;text-align:right;letter-spacing:-0.3px;-webkit-text-stroke:0.2px #000">0,19</div>
<div class="t" style="right:767.20px;top:424.80px;font-size:13px;color:#000;text-align:right;letter-spacing:-0.3px;-webkit-text-stroke:0.2px #000">1715</div>
<div class="t" style="right:695.20px;top:424.80px;font-size:13px;color:#000;text-align:right;letter-spacing:-0.3px;-webkit-text-stroke:0.2px #000">1805,2632</div>
<div class="t" style="right:311.20px;top:424.80px;font-size:13px;color:#000;text-align:right;letter-spacing:-0.3px;-webkit-text-stroke:0.2px #000">0,00062</div>
<div class="t" style="right:1279.20px;top:444.80px;font-size:13px;color:#000;text-align:right;letter-spacing:-0.3px;-webkit-text-stroke:0.2px #000">11</div>
<div class="t" style="right:1215.20px;top:444.80px;font-size:13px;color:#000;text-align:right;letter-spacing:-0.3px;-webkit-text-stroke:0.2px #000">1785</div>
<div class="t" style="right:1151.20px;top:444.80px;font-size:13px;color:#000;text-align:right;letter-spacing:-0.3px;-webkit-text-stroke:0.2px #000">1805</div>
<div class="t" style="right:1087.20px;top:444.80px;font-size:13px;color:#000;text-align:right;letter-spacing:-0.3px;-webkit-text-stroke:0.2px #000">1795</div>
<div class="t" style="right:1023.20px;top:444.80px;font-size:13px;color:#000;text-align:right;letter-spacing:-0.3px;-webkit-text-stroke:0.2px #000">10</div>
<div class="t" style="right:959.20px;top:444.80px;font-size:13px;color:#000;text-align:right;letter-spacing:-0.3px;-webkit-text-stroke:0.2px #000">0,191086</div>
<div class="t" style="right:895.20px;top:444.80px;font-size:13px;color:#000;text-align:right;letter-spacing:-0.3px;-webkit-text-stroke:0.2px #000">0,180952</div>
<div class="t" style="right:831.20px;top:444.80px;font-size:13px;color:#000;text-align:right;letter-spacing:-0.3px;-webkit-text-stroke:0.2px #000">0,172727</div>
<div class="t" style="right:767.20px;top:444.80px;font-size:13px;color:#000;text-align:right;letter-spacing:-0.3px;-webkit-text-stroke:0.2px #000">1895,526</div>
<div class="t" style="right:695.20px;top:444.80px;font-size:13px;color:#000;text-align:right;letter-spacing:-0.3px;-webkit-text-stroke:0.2px #000">1985,7895</div>
<div class="t" style="right:311.20px;top:444.80px;font-size:13px;color:#000;text-align:right;letter-spacing:-0.3px;-webkit-text-stroke:0.2px #000">0,000557</div>
<div class="t" style="left:740.00px;top:262.80px;font-size:13px;color:#000;letter-spacing:-0.1px;-webkit-text-stroke:0.2px #000">&#216;<sub>tube,int</sub> (m)</div>
<div class="t" style="left:740.00px;top:302.80px;font-size:13px;color:#000;letter-spacing:-0.1px;-webkit-text-stroke:0.2px #000">S<sub>tube,int</sub> (m<sup>2</sup>)</div>
<div class="t" style="left:740.00px;top:342.80px;font-size:13px;color:#000;letter-spacing:-0.1px;-webkit-text-stroke:0.2px #000">V<sub>tube,int</sub> (m<sup>3</sup>)</div>
<svg style="left:1068px;top:228px" width="180" height="29" viewBox="0 0 180 29"><rect x="0" y="0" width="180" height="29" fill="#fff"/><text x="6.5" y="17" font-size="14.5" font-family="Liberation Serif" font-style="italic" fill="#000" text-anchor="start">L</text><text x="23.5" y="17" font-size="16" font-family="Liberation Serif" fill="#000" text-anchor="middle">=</text><rect x="33.25" y="11.4" width="9.5" height="1.2" fill="#000"/><text x="38" y="7" font-size="13.5" font-family="Liberation Serif" font-style="italic" fill="#000" text-anchor="middle">n</text><text x="38" y="26" font-size="13.5" font-family="Liberation Serif" fill="#000" text-anchor="middle">2</text><text x="47.5" y="16" font-size="14" font-family="Liberation Serif" fill="#000" text-anchor="middle">&#183;</text><text x="52.5" y="17" font-size="14" font-family="Liberation Serif" fill="#000" text-anchor="start">&#955;</text><text x="62" y="21.5" font-size="9.5" font-family="Liberation Serif" fill="#000" text-anchor="start">2, <tspan font-style="italic">n</tspan></text><text x="86.5" y="16" font-size="17" font-family="Liberation Serif" fill="#000" text-anchor="middle">&#8596;</text><text x="100" y="17" font-size="14" font-family="Liberation Serif" fill="#000" text-anchor="start">&#957;</text><text x="108.5" y="21.5" font-size="9.5" font-family="Liberation Serif" fill="#000" text-anchor="start">2, <tspan font-style="italic">n</tspan></text><text x="132.5" y="17" font-size="16" font-family="Liberation Serif" fill="#000" text-anchor="middle">=</text><rect x="145.75" y="11.4" width="9.5" height="1.2" fill="#000"/><text x="150.5" y="7" font-size="13.5" font-family="Liberation Serif" font-style="italic" fill="#000" text-anchor="middle">n</text><text x="150.5" y="26" font-size="13.5" font-family="Liberation Serif" fill="#000" text-anchor="middle">2</text><text x="159.5" y="16" font-size="14" font-family="Liberation Serif" fill="#000" text-anchor="middle">&#183;</text><rect x="164.25" y="11.4" width="9.5" height="1.2" fill="#000"/><text x="169" y="7" font-size="13.5" font-family="Liberation Serif" font-style="italic" fill="#000" text-anchor="middle">c</text><text x="169" y="26" font-size="13.5" font-family="Liberation Serif" font-style="italic" fill="#000" text-anchor="middle">L</text></svg>
<svg style="left:1068px;top:268px" width="263" height="41" viewBox="0 0 263 41"><rect x="0" y="0" width="263" height="41" fill="#fff"/><text x="3.5" y="25.5" font-size="14.5" font-family="Liberation Serif" font-style="italic" fill="#000" text-anchor="start">L</text><text x="20" y="25.5" font-size="16" font-family="Liberation Serif" fill="#000" text-anchor="middle">=</text><path d="M38.5 3 Q30.5 21.5 38.5 40" fill="none" stroke="#000" stroke-width="1.1"/><path d="M72 3 Q80 21.5 72 40" fill="none" stroke="#000" stroke-width="1.1"/><rect x="38.75" y="20.4" width="9.5" height="1.2" fill="#000"/><text x="43.5" y="16" font-size="13.5" font-family="Liberation Serif" font-style="italic" fill="#000" text-anchor="middle">n</text><text x="43.5" y="35" font-size="13.5" font-family="Liberation Serif" fill="#000" text-anchor="middle">2</text><text x="56" y="25" font-size="16" font-family="Liberation Serif" fill="#000" text-anchor="middle">&#8722;</text><rect x="63.75" y="20.4" width="9.5" height="1.2" fill="#000"/><text x="68.5" y="16" font-size="13.5" font-family="Liberation Serif" fill="#000" text-anchor="middle">1</text><text x="68.5" y="35" font-size="13.5" font-family="Liberation Serif" fill="#000" text-anchor="middle">4</text><text x="86.5" y="25" font-size="14" font-family="Liberation Serif" fill="#000" text-anchor="middle">&#183;</text><text x="92" y="25.5" font-size="14" font-family="Liberation Serif" fill="#000" text-anchor="start">&#955;</text><text x="101.5" y="30" font-size="9.5" font-family="Liberation Serif" fill="#000" text-anchor="start">1, <tspan font-style="italic">n</tspan></text><text x="128.5" y="25" font-size="17" font-family="Liberation Serif" fill="#000" text-anchor="middle">&#8596;</text><text x="143" y="25.5" font-size="14" font-family="Liberation Serif" fill="#000" text-anchor="start">&#957;</text><text x="152.5" y="30" font-size="9.5" font-family="Liberation Serif" fill="#000" text-anchor="start">1, <tspan font-style="italic">n</tspan></text><text x="174.5" y="25.5" font-size="16" font-family="Liberation Serif" fill="#000" text-anchor="middle">=</text><path d="M196.5 3 Q188.5 21.5 196.5 40" fill="none" stroke="#000" stroke-width="1.1"/><path d="M230.5 3 Q238.5 21.5 230.5 40" fill="none" stroke="#000" stroke-width="1.1"/><rect x="196.25" y="20.4" width="9.5" height="1.2" fill="#000"/><text x="201" y="16" font-size="13.5" font-family="Liberation Serif" font-style="italic" fill="#000" text-anchor="middle">n</text><text x="201" y="35" font-size="13.5" font-family="Liberation Serif" fill="#000" text-anchor="middle">2</text><text x="214" y="25" font-size="16" font-family="Liberation Serif" fill="#000" text-anchor="middle">&#8722;</text><rect x="222.25" y="20.4" width="9.5" height="1.2" fill="#000"/><text x="227" y="16" font-size="13.5" font-family="Liberation Serif" fill="#000" text-anchor="middle">1</text><text x="227" y="35" font-size="13.5" font-family="Liberation Serif" fill="#000" text-anchor="middle">4</text><text x="244" y="25" font-size="14" font-family="Liberation Serif" fill="#000" text-anchor="middle">&#183;</text><rect x="248.75" y="20.4" width="9.5" height="1.2" fill="#000"/><text x="253.5" y="16" font-size="13.5" font-family="Liberation Serif" font-style="italic" fill="#000" text-anchor="middle">c</text><text x="253.5" y="35" font-size="13.5" font-family="Liberation Serif" font-style="italic" fill="#000" text-anchor="middle">L</text></svg>
<svg style="left:26px;top:461px" width="1319" height="256" viewBox="26 461 1319 256" overflow="hidden"><g><rect x="25.5" y="460.5" width="479" height="400" fill="#fff" stroke="#d9d9d9"/><text x="221.00" y="493.00" font-size="20.5" font-family="Liberation Sans" fill="#595959" text-anchor="start" >&#957;</text><text x="232.40" y="497.70" font-size="13.8" font-family="Liberation Sans" fill="#595959" text-anchor="start" >exp,n</text><text x="267.30" y="492.00" font-size="22" font-family="Liberation Sans" fill="#595959" text-anchor="start" >(</text><text x="275.00" y="493.50" font-size="19" font-family="Liberation Sans" fill="#595959" text-anchor="start" >&#955;</text><text x="285.00" y="497.70" font-size="14.5" font-family="Liberation Sans" fill="#595959" text-anchor="start" >i,n</text><text x="301.30" y="492.00" font-size="22" font-family="Liberation Sans" fill="#595959" text-anchor="start" >)</text><path d="M97 688.00H362.5" stroke="#d9d9d9" stroke-width="1"/><text x="85.80" y="691.40" font-size="10.8" font-family="Liberation Sans" fill="#595959" text-anchor="end" >0</text><path d="M97 670.85H362.5" stroke="#d9d9d9" stroke-width="1"/><text x="85.80" y="674.25" font-size="10.8" font-family="Liberation Sans" fill="#595959" text-anchor="end" >200</text><path d="M97 653.70H362.5" stroke="#d9d9d9" stroke-width="1"/><text x="85.80" y="657.10" font-size="10.8" font-family="Liberation Sans" fill="#595959" text-anchor="end" >400</text><path d="M97 636.55H362.5" stroke="#d9d9d9" stroke-width="1"/><text x="85.80" y="639.95" font-size="10.8" font-family="Liberation Sans" fill="#595959" text-anchor="end" >600</text><path d="M97 619.40H362.5" stroke="#d9d9d9" stroke-width="1"/><text x="85.80" y="622.80" font-size="10.8" font-family="Liberation Sans" fill="#595959" text-anchor="end" >800</text><path d="M97 602.25H362.5" stroke="#d9d9d9" stroke-width="1"/><text x="85.80" y="605.65" font-size="10.8" font-family="Liberation Sans" fill="#595959" text-anchor="end" >1000</text><path d="M97 585.10H362.5" stroke="#d9d9d9" stroke-width="1"/><text x="85.80" y="588.50" font-size="10.8" font-family="Liberation Sans" fill="#595959" text-anchor="end" >1200</text><path d="M97 567.95H362.5" stroke="#d9d9d9" stroke-width="1"/><text x="85.80" y="571.35" font-size="10.8" font-family="Liberation Sans" fill="#595959" text-anchor="end" >1400</text><path d="M97 550.80H362.5" stroke="#d9d9d9" stroke-width="1"/><text x="85.80" y="554.20" font-size="10.8" font-family="Liberation Sans" fill="#595959" text-anchor="end" >1600</text><path d="M97 533.65H362.5" stroke="#d9d9d9" stroke-width="1"/><text x="85.80" y="537.05" font-size="10.8" font-family="Liberation Sans" fill="#595959" text-anchor="end" >1800</text><path d="M97 516.50H362.5" stroke="#d9d9d9" stroke-width="1"/><text x="85.80" y="519.90" font-size="10.8" font-family="Liberation Sans" fill="#595959" text-anchor="end" >2000</text><path d="M97.00 516.5V688" stroke="#d9d9d9" stroke-width="1"/><text x="97.00" y="707.50" font-size="10.8" font-family="Liberation Sans" fill="#595959" text-anchor="middle" >0</text><path d="M163.38 516.5V688" stroke="#d9d9d9" stroke-width="1"/><text x="163.38" y="707.50" font-size="10.8" font-family="Liberation Sans" fill="#595959" text-anchor="middle" >1</text><path d="M229.75 516.5V688" stroke="#d9d9d9" stroke-width="1"/><text x="229.75" y="707.50" font-size="10.8" font-family="Liberation Sans" fill="#595959" text-anchor="middle" >2</text><path d="M296.12 516.5V688" stroke="#d9d9d9" stroke-width="1"/><text x="296.12" y="707.50" font-size="10.8" font-family="Liberation Sans" fill="#595959" text-anchor="middle" >3</text><path d="M362.50 516.5V688" stroke="#d9d9d9" stroke-width="1"/><text x="362.50" y="707.50" font-size="10.8" font-family="Liberation Sans" fill="#595959" text-anchor="middle" >4</text><path d="M109.68 534.08 L110.24 540.58 L110.83 546.80 L111.44 552.76 L112.07 558.47 L112.74 563.93 L113.43 569.17 L114.15 574.19 L114.91 578.99 L115.70 583.59 L116.52 588.00 L117.38 592.22 L118.28 596.26 L119.22 600.13 L120.20 603.84 L121.22 607.39 L122.29 610.80 L123.40 614.06 L124.56 617.18 L125.78 620.17 L127.05 623.03 L128.37 625.77 L129.75 628.40 L131.20 630.91 L132.70 633.32 L134.28 635.63 L135.92 637.84 L137.64 639.96 L139.43 641.99 L141.30 643.93 L143.25 645.79 L145.29 647.57 L147.41 649.28 L149.64 650.91 L151.96 652.48 L154.38 653.98 L156.91 655.41 L159.55 656.79 L162.30 658.10 L165.18 659.37 L168.18 660.58 L171.32 661.73 L174.60 662.84 L178.02 663.90 L181.59 664.92 L185.31 665.89 L189.21 666.83 L193.27 667.72 L197.51 668.58 L201.94 669.40 L206.57 670.18 L211.39 670.93 L216.44 671.65 L221.70 672.34 L227.19 673.01 L232.93 673.64 L238.92 674.24 L245.18 674.82 L251.71 675.38 L258.52 675.91 L265.64 676.42" fill="none" stroke="#a5a5a5" stroke-width="1.8" stroke-dasharray="1.8 2.5"/><circle cx="349.23" cy="676.42" r="3.6" fill="#5b9bd5"/><circle cx="181.08" cy="668.06" r="3.6" fill="#5b9bd5"/><circle cx="147.44" cy="655.41" r="3.6" fill="#5b9bd5"/><circle cx="133.03" cy="640.41" r="3.6" fill="#5b9bd5"/><circle cx="125.02" cy="625.83" r="3.6" fill="#5b9bd5"/><circle cx="119.93" cy="610.18" r="3.6" fill="#5b9bd5"/><circle cx="116.40" cy="595.18" r="3.6" fill="#5b9bd5"/><circle cx="113.81" cy="579.96" r="3.6" fill="#5b9bd5"/><circle cx="111.84" cy="564.31" r="3.6" fill="#5b9bd5"/><circle cx="110.28" cy="549.73" r="3.6" fill="#5b9bd5"/><circle cx="109.01" cy="534.08" r="3.6" fill="#5b9bd5"/><circle cx="223.11" cy="676.42" r="3.6" fill="#ed7d31"/><circle cx="160.06" cy="668.06" r="3.6" fill="#ed7d31"/><circle cx="139.04" cy="655.41" r="3.6" fill="#ed7d31"/><circle cx="128.53" cy="640.41" r="3.6" fill="#ed7d31"/><circle cx="122.22" cy="625.83" r="3.6" fill="#ed7d31"/><circle cx="118.02" cy="610.18" r="3.6" fill="#ed7d31"/><circle cx="115.02" cy="595.18" r="3.6" fill="#ed7d31"/><circle cx="112.76" cy="579.96" r="3.6" fill="#ed7d31"/><circle cx="111.01" cy="564.31" r="3.6" fill="#ed7d31"/><circle cx="109.61" cy="549.73" r="3.6" fill="#ed7d31"/><circle cx="108.46" cy="534.08" r="3.6" fill="#ed7d31"/><circle cx="265.64" cy="676.42" r="3.6" fill="#a5a5a5"/><circle cx="194.92" cy="668.06" r="3.6" fill="#a5a5a5"/><circle cx="156.91" cy="655.41" r="3.6" fill="#a5a5a5"/><circle cx="138.02" cy="640.41" r="3.6" fill="#a5a5a5"/><circle cx="128.40" cy="625.83" r="3.6" fill="#a5a5a5"/><circle cx="122.09" cy="610.18" r="3.6" fill="#a5a5a5"/><circle cx="118.03" cy="595.18" r="3.6" fill="#a5a5a5"/><circle cx="115.07" cy="579.96" r="3.6" fill="#a5a5a5"/><circle cx="112.78" cy="564.31" r="3.6" fill="#a5a5a5"/><circle cx="111.12" cy="549.73" r="3.6" fill="#a5a5a5"/><circle cx="109.68" cy="534.08" r="3.6" fill="#a5a5a5"/><circle cx="404.7" cy="591.7" r="3.5" fill="#5b9bd5"/><text x="425.00" y="594.40" font-size="10.8" font-family="Liberation Sans" fill="#595959" text-anchor="start" >&#955;1 (m)</text><circle cx="404.7" cy="614.3000000000001" r="3.5" fill="#ed7d31"/><text x="425.00" y="617.00" font-size="10.8" font-family="Liberation Sans" fill="#595959" text-anchor="start" >&#955;2 (m)</text><circle cx="404.7" cy="636.9000000000001" r="3.5" fill="#a5a5a5"/><text x="425.00" y="639.60" font-size="10.8" font-family="Liberation Sans" fill="#595959" text-anchor="start" >&#955; (m)</text><path d="M387 659H421" stroke="#a5a5a5" stroke-width="1.8" stroke-dasharray="1.8 2.5"/><text x="425.50" y="661.70" font-size="10.8" font-family="Liberation Sans" fill="#595959" text-anchor="start" >Power (&#955; (m))</text><g transform="translate(54,603) rotate(-90)"><text x="0.00" y="0.00" font-size="11.2" font-family="Liberation Sans" fill="#595959" text-anchor="middle" >&#957;<tspan font-size="8.5" dy="2">exp,n</tspan><tspan dy="-2"> (Hz)</tspan></text></g><rect x="505.5" y="460.5" width="479" height="400" fill="#fff" stroke="#d9d9d9"/><text x="703.00" y="493.00" font-size="20.5" font-family="Liberation Sans" fill="#595959" text-anchor="start" >&#957;</text><text x="714.20" y="497.70" font-size="13.8" font-family="Liberation Sans" fill="#595959" text-anchor="start" >exp,n</text><text x="749.00" y="492.00" font-size="22" font-family="Liberation Sans" fill="#595959" text-anchor="start" >(</text><text x="755.50" y="493.50" font-size="17.5" font-family="Liberation Sans" fill="#595959" text-anchor="start" >&#957;</text><text x="764.60" y="497.70" font-size="14.5" font-family="Liberation Sans" fill="#595959" text-anchor="start" >i,n</text><text x="781.00" y="492.00" font-size="22" font-family="Liberation Sans" fill="#595959" text-anchor="start" >)</text><path d="M577 688.00H833" stroke="#d9d9d9" stroke-width="1"/><text x="566.60" y="691.40" font-size="10.8" font-family="Liberation Sans" fill="#595959" text-anchor="end" >0</text><path d="M577 670.85H833" stroke="#d9d9d9" stroke-width="1"/><text x="566.60" y="674.25" font-size="10.8" font-family="Liberation Sans" fill="#595959" text-anchor="end" >200</text><path d="M577 653.70H833" stroke="#d9d9d9" stroke-width="1"/><text x="566.60" y="657.10" font-size="10.8" font-family="Liberation Sans" fill="#595959" text-anchor="end" >400</text><path d="M577 636.55H833" stroke="#d9d9d9" stroke-width="1"/><text x="566.60" y="639.95" font-size="10.8" font-family="Liberation Sans" fill="#595959" text-anchor="end" >600</text><path d="M577 619.40H833" stroke="#d9d9d9" stroke-width="1"/><text x="566.60" y="622.80" font-size="10.8" font-family="Liberation Sans" fill="#595959" text-anchor="end" >800</text><path d="M577 602.25H833" stroke="#d9d9d9" stroke-width="1"/><text x="566.60" y="605.65" font-size="10.8" font-family="Liberation Sans" fill="#595959" text-anchor="end" >1000</text><path d="M577 585.10H833" stroke="#d9d9d9" stroke-width="1"/><text x="566.60" y="588.50" font-size="10.8" font-family="Liberation Sans" fill="#595959" text-anchor="end" >1200</text><path d="M577 567.95H833" stroke="#d9d9d9" stroke-width="1"/><text x="566.60" y="571.35" font-size="10.8" font-family="Liberation Sans" fill="#595959" text-anchor="end" >1400</text><path d="M577 550.80H833" stroke="#d9d9d9" stroke-width="1"/><text x="566.60" y="554.20" font-size="10.8" font-family="Liberation Sans" fill="#595959" text-anchor="end" >1600</text><path d="M577 533.65H833" stroke="#d9d9d9" stroke-width="1"/><text x="566.60" y="537.05" font-size="10.8" font-family="Liberation Sans" fill="#595959" text-anchor="end" >1800</text><path d="M577 516.50H833" stroke="#d9d9d9" stroke-width="1"/><text x="566.60" y="519.90" font-size="10.8" font-family="Liberation Sans" fill="#595959" text-anchor="end" >2000</text><path d="M577.00 516.5V688" stroke="#d9d9d9" stroke-width="1"/><text x="577.00" y="707.50" font-size="10.8" font-family="Liberation Sans" fill="#595959" text-anchor="middle" >0</text><path d="M628.20 516.5V688" stroke="#d9d9d9" stroke-width="1"/><text x="628.20" y="707.50" font-size="10.8" font-family="Liberation Sans" fill="#595959" text-anchor="middle" >500</text><path d="M679.40 516.5V688" stroke="#d9d9d9" stroke-width="1"/><text x="679.40" y="707.50" font-size="10.8" font-family="Liberation Sans" fill="#595959" text-anchor="middle" >1000</text><path d="M730.60 516.5V688" stroke="#d9d9d9" stroke-width="1"/><text x="730.60" y="707.50" font-size="10.8" font-family="Liberation Sans" fill="#595959" text-anchor="middle" >1500</text><path d="M781.80 516.5V688" stroke="#d9d9d9" stroke-width="1"/><text x="781.80" y="707.50" font-size="10.8" font-family="Liberation Sans" fill="#595959" text-anchor="middle" >2000</text><path d="M833.00 516.5V688" stroke="#d9d9d9" stroke-width="1"/><text x="833.00" y="707.50" font-size="10.8" font-family="Liberation Sans" fill="#595959" text-anchor="middle" >2500</text><path d="M590.82 676.42L760.81 534.08" stroke="#a5a5a5" stroke-width="1.8" stroke-dasharray="1.8 2.5"/><circle cx="586.24" cy="676.42" r="3.6" fill="#5b9bd5"/><circle cx="604.73" cy="668.06" r="3.6" fill="#5b9bd5"/><circle cx="623.21" cy="655.41" r="3.6" fill="#5b9bd5"/><circle cx="641.70" cy="640.41" r="3.6" fill="#5b9bd5"/><circle cx="660.19" cy="625.83" r="3.6" fill="#5b9bd5"/><circle cx="678.67" cy="610.18" r="3.6" fill="#5b9bd5"/><circle cx="697.16" cy="595.18" r="3.6" fill="#5b9bd5"/><circle cx="715.64" cy="579.96" r="3.6" fill="#5b9bd5"/><circle cx="734.13" cy="564.31" r="3.6" fill="#5b9bd5"/><circle cx="752.62" cy="549.73" r="3.6" fill="#5b9bd5"/><circle cx="771.10" cy="534.08" r="3.6" fill="#5b9bd5"/><circle cx="595.49" cy="676.42" r="3.6" fill="#ed7d31"/><circle cx="613.97" cy="668.06" r="3.6" fill="#ed7d31"/><circle cx="632.46" cy="655.41" r="3.6" fill="#ed7d31"/><circle cx="650.94" cy="640.41" r="3.6" fill="#ed7d31"/><circle cx="669.43" cy="625.83" r="3.6" fill="#ed7d31"/><circle cx="687.92" cy="610.18" r="3.6" fill="#ed7d31"/><circle cx="706.40" cy="595.18" r="3.6" fill="#ed7d31"/><circle cx="724.89" cy="579.96" r="3.6" fill="#ed7d31"/><circle cx="743.37" cy="564.31" r="3.6" fill="#ed7d31"/><circle cx="761.86" cy="549.73" r="3.6" fill="#ed7d31"/><circle cx="780.34" cy="534.08" r="3.6" fill="#ed7d31"/><circle cx="590.82" cy="676.42" r="3.6" fill="#a5a5a5"/><circle cx="600.81" cy="668.06" r="3.6" fill="#a5a5a5"/><circle cx="615.91" cy="655.41" r="3.6" fill="#a5a5a5"/><circle cx="633.83" cy="640.41" r="3.6" fill="#a5a5a5"/><circle cx="651.24" cy="625.83" r="3.6" fill="#a5a5a5"/><circle cx="669.93" cy="610.18" r="3.6" fill="#a5a5a5"/><circle cx="687.85" cy="595.18" r="3.6" fill="#a5a5a5"/><circle cx="706.02" cy="579.96" r="3.6" fill="#a5a5a5"/><circle cx="724.71" cy="564.31" r="3.6" fill="#a5a5a5"/><circle cx="742.12" cy="549.73" r="3.6" fill="#a5a5a5"/><circle cx="760.81" cy="534.08" r="3.6" fill="#a5a5a5"/><circle cx="883.6" cy="590.7" r="3.5" fill="#5b9bd5"/><text x="904.50" y="593.40" font-size="10.8" font-family="Liberation Sans" fill="#595959" text-anchor="start" >&#957;1 (Hz)</text><circle cx="883.6" cy="613.5" r="3.5" fill="#ed7d31"/><text x="904.50" y="616.20" font-size="10.8" font-family="Liberation Sans" fill="#595959" text-anchor="start" >&#957;2 (Hz)</text><circle cx="883.6" cy="636.3000000000001" r="3.5" fill="#a5a5a5"/><text x="904.50" y="639.00" font-size="10.8" font-family="Liberation Sans" fill="#595959" text-anchor="start" >&#957; (Hz)</text><path d="M866 658.8H901" stroke="#a5a5a5" stroke-width="1.8" stroke-dasharray="1.8 2.5"/><text x="904.50" y="661.50" font-size="10.8" font-family="Liberation Sans" fill="#595959" text-anchor="start" >Linear (&#957; (Hz))</text><g transform="translate(534,603) rotate(-90)"><text x="0.00" y="0.00" font-size="11.2" font-family="Liberation Sans" fill="#595959" text-anchor="middle" >&#957;<tspan font-size="8.5" dy="2">exp,n</tspan><tspan dy="-2"> (Hz)</tspan></text></g><rect x="985.5" y="460.5" width="479" height="400" fill="#fff" stroke="#d9d9d9"/><text x="1174.00" y="493.00" font-size="20.5" font-family="Liberation Sans" fill="#595959" text-anchor="start" >&#957;</text><text x="1185.00" y="497.70" font-size="13.8" font-family="Liberation Sans" fill="#595959" text-anchor="start" >exp,n</text><text x="1220.20" y="492.00" font-size="22" font-family="Liberation Sans" fill="#595959" text-anchor="start" >(</text><text x="1225.80" y="493.50" font-size="17.5" font-family="Liberation Sans" fill="#595959" text-anchor="start" >&#957;</text><text x="1236.00" y="497.70" font-size="14.2" font-family="Liberation Sans" fill="#595959" text-anchor="start" >2,n-1</text><text x="1269.00" y="492.00" font-size="22" font-family="Liberation Sans" fill="#595959" text-anchor="start" >)</text><path d="M1057 688.00H1306.5" stroke="#d9d9d9" stroke-width="1"/><text x="1045.90" y="691.40" font-size="10.8" font-family="Liberation Sans" fill="#595959" text-anchor="end" >0</text><path d="M1057 670.85H1306.5" stroke="#d9d9d9" stroke-width="1"/><text x="1045.90" y="674.25" font-size="10.8" font-family="Liberation Sans" fill="#595959" text-anchor="end" >200</text><path d="M1057 653.70H1306.5" stroke="#d9d9d9" stroke-width="1"/><text x="1045.90" y="657.10" font-size="10.8" font-family="Liberation Sans" fill="#595959" text-anchor="end" >400</text><path d="M1057 636.55H1306.5" stroke="#d9d9d9" stroke-width="1"/><text x="1045.90" y="639.95" font-size="10.8" font-family="Liberation Sans" fill="#595959" text-anchor="end" >600</text><path d="M1057 619.40H1306.5" stroke="#d9d9d9" stroke-width="1"/><text x="1045.90" y="622.80" font-size="10.8" font-family="Liberation Sans" fill="#595959" text-anchor="end" >800</text><path d="M1057 602.25H1306.5" stroke="#d9d9d9" stroke-width="1"/><text x="1045.90" y="605.65" font-size="10.8" font-family="Liberation Sans" fill="#595959" text-anchor="end" >1000</text><path d="M1057 585.10H1306.5" stroke="#d9d9d9" stroke-width="1"/><text x="1045.90" y="588.50" font-size="10.8" font-family="Liberation Sans" fill="#595959" text-anchor="end" >1200</text><path d="M1057 567.95H1306.5" stroke="#d9d9d9" stroke-width="1"/><text x="1045.90" y="571.35" font-size="10.8" font-family="Liberation Sans" fill="#595959" text-anchor="end" >1400</text><path d="M1057 550.80H1306.5" stroke="#d9d9d9" stroke-width="1"/><text x="1045.90" y="554.20" font-size="10.8" font-family="Liberation Sans" fill="#595959" text-anchor="end" >1600</text><path d="M1057 533.65H1306.5" stroke="#d9d9d9" stroke-width="1"/><text x="1045.90" y="537.05" font-size="10.8" font-family="Liberation Sans" fill="#595959" text-anchor="end" >1800</text><path d="M1057 516.50H1306.5" stroke="#d9d9d9" stroke-width="1"/><text x="1045.90" y="519.90" font-size="10.8" font-family="Liberation Sans" fill="#595959" text-anchor="end" >2000</text><path d="M1057.00 516.5V688" stroke="#d9d9d9" stroke-width="1"/><text x="1057.00" y="707.50" font-size="10.8" font-family="Liberation Sans" fill="#595959" text-anchor="middle" >0</text><path d="M1119.38 516.5V688" stroke="#d9d9d9" stroke-width="1"/><text x="1119.38" y="707.50" font-size="10.8" font-family="Liberation Sans" fill="#595959" text-anchor="middle" >500</text><path d="M1181.75 516.5V688" stroke="#d9d9d9" stroke-width="1"/><text x="1181.75" y="707.50" font-size="10.8" font-family="Liberation Sans" fill="#595959" text-anchor="middle" >1000</text><path d="M1244.12 516.5V688" stroke="#d9d9d9" stroke-width="1"/><text x="1244.12" y="707.50" font-size="10.8" font-family="Liberation Sans" fill="#595959" text-anchor="middle" >1500</text><path d="M1306.50 516.5V688" stroke="#d9d9d9" stroke-width="1"/><text x="1306.50" y="707.50" font-size="10.8" font-family="Liberation Sans" fill="#595959" text-anchor="middle" >2000</text><path d="M1079.52 668.06L1282.21 534.08" stroke="#ed7d31" stroke-width="1.8" stroke-dasharray="1.8 2.5"/><circle cx="1079.52" cy="668.06" r="3.6" fill="#ed7d31"/><circle cx="1102.04" cy="655.41" r="3.6" fill="#ed7d31"/><circle cx="1124.56" cy="640.41" r="3.6" fill="#ed7d31"/><circle cx="1147.08" cy="625.83" r="3.6" fill="#ed7d31"/><circle cx="1169.60" cy="610.18" r="3.6" fill="#ed7d31"/><circle cx="1192.12" cy="595.18" r="3.6" fill="#ed7d31"/><circle cx="1214.64" cy="579.96" r="3.6" fill="#ed7d31"/><circle cx="1237.17" cy="564.31" r="3.6" fill="#ed7d31"/><circle cx="1259.69" cy="549.73" r="3.6" fill="#ed7d31"/><circle cx="1282.21" cy="534.08" r="3.6" fill="#ed7d31"/><text x="1340.00" y="490.50" font-size="10.8" font-family="Liberation Sans" fill="#595959" text-anchor="start" >y</text><text x="1340.00" y="527.50" font-size="10.8" font-family="Liberation Sans" fill="#595959" text-anchor="start" >y</text><text x="1340.00" y="542.00" font-size="10.8" font-family="Liberation Sans" fill="#595959" text-anchor="start" >R</text><circle cx="1341" cy="635.8" r="1" fill="#ed7d31"/><g transform="translate(1014,603) rotate(-90)"><text x="0.00" y="0.00" font-size="11.2" font-family="Liberation Sans" fill="#595959" text-anchor="middle" >&#957;<tspan font-size="8.5" dy="2">exp,n</tspan><tspan dy="-2"> (Hz)</tspan></text></g></g></svg>
<div class="a" style="left:1344px;top:215px;width:1px;height:502px;background:#c6c6c6;"></div>
<div class="a" style="left:1345px;top:196px;width:21px;height:521px;background:#e6e6e6;"></div>
<div class="a" style="left:1348px;top:198px;width:15px;height:15px;background:#fff;border:1px solid #ababab"></div>
<svg style="left:1351px;top:203px" width="9" height="5" viewBox="0 0 9 5"><path d="M0 4.5L4.5 0 9 4.5z" fill="#777"/></svg>
<div class="a" style="left:1348px;top:213px;width:15px;height:422px;background:#fff;border:1px solid #ababab"></div>
<div class="a" style="left:1349px;top:634px;width:13px;height:69px;background:#dadada;"></div>
<div class="a" style="left:1348px;top:703px;width:15px;height:15px;background:#fff;border:1px solid #ababab"></div>
<svg style="left:1351px;top:708px" width="9" height="5" viewBox="0 0 9 5"><path d="M0 0h9L4.5 4.5z" fill="#777"/></svg>
<div class="a" style="left:0px;top:717px;width:1366px;height:28px;background:#e6e6e6;"></div>
<div class="a" style="left:0px;top:717px;width:1344px;height:1px;background:#c6c6c6;"></div>
<svg style="left:26px;top:727px" width="5" height="9" viewBox="0 0 5 9"><path d="M4.5 0v9L0 4.5z" fill="#c0c0c0"/></svg>
<svg style="left:55px;top:727px" width="5" height="9" viewBox="0 0 5 9"><path d="M0 0v9l4.5-4.5z" fill="#c0c0c0"/></svg>
<div class="a" style="left:100px;top:717px;width:65px;height:26px;background:#fff;border-left:1px solid #c6c6c6;border-right:1px solid #c6c6c6"></div>
<div class="a" style="left:100px;top:741px;width:65px;height:2px;background:#217346;"></div>
<div class="t" style="left:-67.50px;width:400px;text-align:center;top:724.50px;font-size:12.4px;color:#217346;font-weight:bold">Sheet1</div>
<svg style="left:197px;top:722px" width="18" height="18" viewBox="0 0 18 18"><circle cx="9" cy="9" r="7.8" fill="none" stroke="#666" stroke-width="1.2"/><path d="M9 4.5v9M4.5 9h9" stroke="#666" stroke-width="1.6"/></svg>
<svg style="left:818px;top:726px" width="3" height="11" viewBox="0 0 3 11"><circle cx="1.2" cy="1.5" r="1" fill="#aaa"/><circle cx="1.2" cy="5.5" r="1" fill="#aaa"/><circle cx="1.2" cy="9.5" r="1" fill="#aaa"/></svg>
<div class="a" style="left:836px;top:724px;width:508px;height:16px;background:#dadada;"></div>
<div class="a" style="left:836px;top:724px;width:15px;height:16px;background:#fff;border:1px solid #ababab"></div>
<svg style="left:841px;top:728px" width="5" height="8" viewBox="0 0 5 8"><path d="M4.5 0v8L0 4z" fill="#555"/></svg>
<div class="a" style="left:850px;top:724px;width:385px;height:16px;background:#fff;border:1px solid #ababab"></div>
<div class="a" style="left:1330px;top:724px;width:15px;height:16px;background:#fff;border:1px solid #ababab"></div>
<svg style="left:1336px;top:728px" width="5" height="8" viewBox="0 0 5 8"><path d="M0 0v8l4.5-4z" fill="#555"/></svg>
<div class="a" style="left:0px;top:744px;width:1366px;height:1px;background:#d0d0d0;"></div>
<div class="a" style="left:0px;top:745px;width:1366px;height:21px;background:#f1f1f1;"></div>
<div class="t" style="left:7.50px;top:750.52px;font-size:11.2px;color:#444;">Ready</div>
<div class="a" style="left:1071px;top:745px;width:38px;height:21px;background:#d2d2d2;"></div>
<svg style="left:1082px;top:748px" width="15" height="15" viewBox="0 0 15 15"><rect x="0.5" y="0.5" width="14" height="14" fill="none" stroke="#555"/><path d="M0.5 5.2h14M0.5 9.8h14M5.2 0.5v14M9.8 0.5v14" stroke="#555"/></svg>
<svg style="left:1120px;top:748px" width="15" height="15" viewBox="0 0 15 15"><rect x="0.5" y="0.5" width="14" height="14" fill="none" stroke="#555"/><rect x="3.5" y="3.5" width="8" height="8" fill="none" stroke="#555"/><path d="M5 6h5M5 8h5" stroke="#555"/></svg>
<svg style="left:1158px;top:748px" width="15" height="15" viewBox="0 0 15 15"><path d="M0.5 14.5V0.5h14v14" fill="none" stroke="#555"/><path d="M5.5 0.5v6h4v-6M0.5 9.5h14" fill="none" stroke="#555"/></svg>
<div class="a" style="left:1189px;top:755px;width:8px;height:2px;background:#555;"></div>
<div class="a" style="left:1200px;top:755px;width:100px;height:1px;background:#aaa;"></div>
<div class="a" style="left:1248px;top:750px;width:4px;height:11px;background:#555;"></div>
<div class="a" style="left:1303px;top:755px;width:9px;height:2px;background:#555;"></div>
<div class="a" style="left:1306.5px;top:751.5px;width:2px;height:9px;background:#555;"></div>
<div class="t" style="right:9.00px;top:750.43px;font-size:11.3px;color:#444;text-align:right;">100 %</div>
<div class="a" style="left:0px;top:766px;width:1366px;height:3px;background:#202020;"></div></body></html>
